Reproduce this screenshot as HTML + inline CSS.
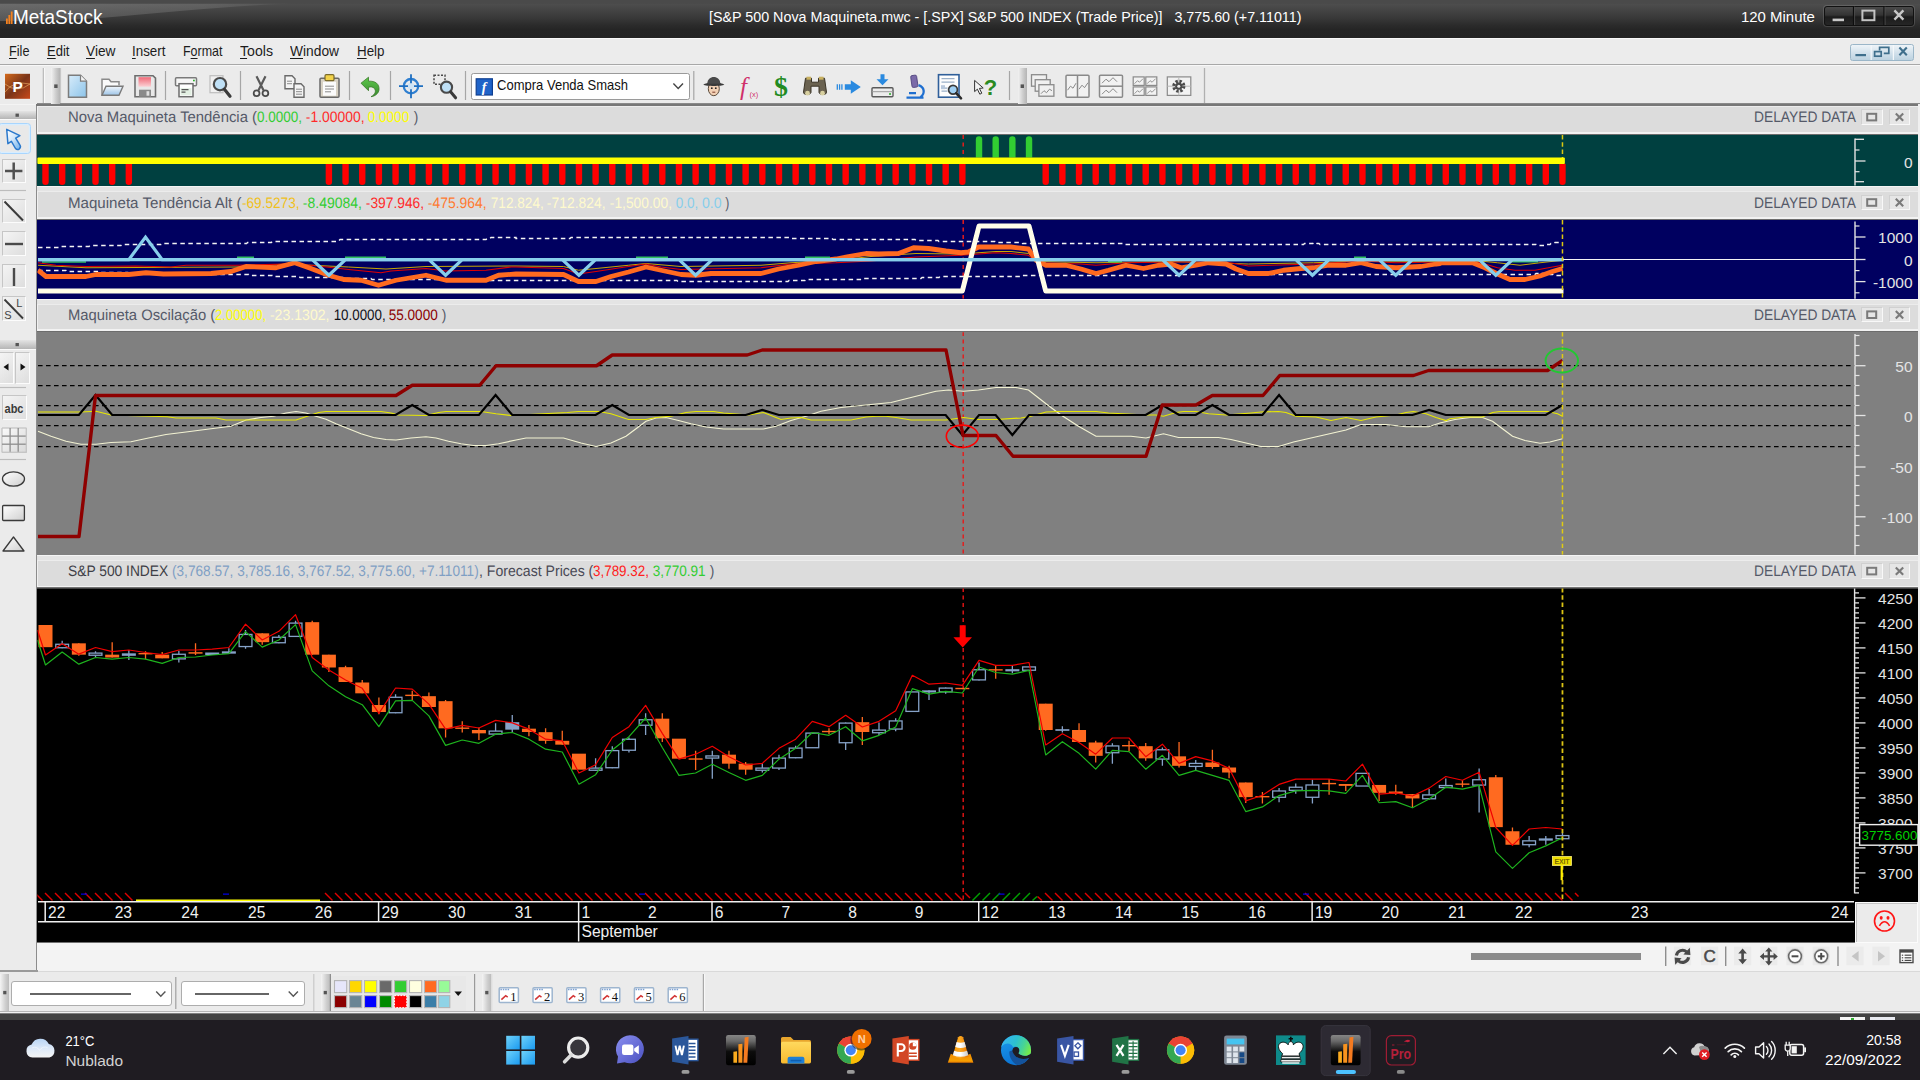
<!DOCTYPE html>
<html><head><meta charset="utf-8"><title>MetaStock</title>
<style>
html,body{margin:0;padding:0;background:#ebebeb;}
body{width:1920px;height:1080px;overflow:hidden;position:relative;font-family:"Liberation Sans", sans-serif;}
#root{position:absolute;left:0;top:0;width:1920px;height:1080px;overflow:hidden;}
#root>div{position:absolute;}
.t,.ht{position:absolute;white-space:nowrap;transform-origin:0 0;line-height:1.15;}
.ht{font-size:15.2px;color:#545968;}
.t u{text-decoration:underline;text-underline-offset:1.500px;text-decoration-thickness:1px}
svg{position:absolute;left:0;top:0;}
svg text{font-family:"Liberation Sans", sans-serif;}
</style></head>
<body>
<div id="root">
<div style="left:0px;top:0px;width:1920px;height:1080px;background:#ebebeb"></div>
<div style="left:0px;top:0px;width:1920px;height:38px;background:linear-gradient(#4a4a4a 0%,#4a4a4a 9%,#4d4d4d 10.5%,#454545 25%,#383838 48%,#2b2b2b 66%,#252525 78%,#242424 100%)"></div>
<div style="left:0px;top:38px;width:1920px;height:26px;background:#ececec;border-top:1px solid #f8f8f8;box-sizing:border-box"></div>
<div style="left:0px;top:64px;width:1920px;height:1px;background:#a8a8a8"></div>
<div style="left:0px;top:65px;width:1920px;height:1px;background:#f8f8f8"></div>
<div style="left:0px;top:66px;width:1920px;height:38px;background:#ebebeb"></div>
<div style="left:37px;top:103px;width:1883px;height:1.5px;background:#8a8a8a"></div>
<div style="left:0px;top:104px;width:37px;height:1px;background:#f4f4f4"></div>
<div style="left:35.6px;top:104px;width:1.6px;height:868px;background:#8c8c8c"></div>
<div style="left:1918px;top:104px;width:2px;height:868px;background:#f0f0f0"></div>
<div style="left:37.4px;top:135px;width:1880.6px;height:50.6px;background:#004040"></div>
<div style="left:37.4px;top:220px;width:1880.6px;height:78.7px;background:#000060"></div>
<div style="left:37.4px;top:332.2px;width:1880.6px;height:222.5px;background:#808080"></div>
<div style="left:37.4px;top:588.6px;width:1880.6px;height:353.4px;background:#000000"></div>
<div style="left:37.4px;top:105.9px;width:1880.6px;height:29.1px;background:#dcdcdc;border-top:1.6px solid #ececec;border-left:1.5px solid #f0f0f0;box-sizing:border-box"></div>
<div style="left:37.4px;top:132.1px;width:1880.6px;height:1.5px;background:#f2f2f2"></div>
<div style="left:37.4px;top:133.6px;width:1880.6px;height:1.4px;background:linear-gradient(#7a7a7a,#6a6a6a 60%,#004040)"></div>
<div style="left:37.4px;top:185.6px;width:1881px;height:1.3px;background:#f4f4f4"></div>
<div style="left:37.4px;top:186.9px;width:1881px;height:3.9px;background:#e4e4e4"></div>
<div style="left:37.4px;top:190.8px;width:1880.6px;height:29.2px;background:#dcdcdc;border-top:1.6px solid #ececec;border-left:1.5px solid #f0f0f0;box-sizing:border-box"></div>
<div style="left:37.4px;top:217.1px;width:1880.6px;height:1.5px;background:#f2f2f2"></div>
<div style="left:37.4px;top:218.6px;width:1880.6px;height:1.4px;background:linear-gradient(#7a7a7a,#6a6a6a 60%,#000060)"></div>
<div style="left:37.4px;top:298.7px;width:1881px;height:1.3px;background:#f4f4f4"></div>
<div style="left:37.4px;top:300px;width:1881px;height:3.9px;background:#e4e4e4"></div>
<div style="left:37.4px;top:303.9px;width:1880.6px;height:28.3px;background:#dcdcdc;border-top:1.6px solid #ececec;border-left:1.5px solid #f0f0f0;box-sizing:border-box"></div>
<div style="left:37.4px;top:329.3px;width:1880.6px;height:1.5px;background:#f2f2f2"></div>
<div style="left:37.4px;top:330.8px;width:1880.6px;height:1.4px;background:linear-gradient(#7a7a7a,#6a6a6a 60%,#808080)"></div>
<div style="left:37.4px;top:554.7px;width:1881px;height:1.3px;background:#f4f4f4"></div>
<div style="left:37.4px;top:556px;width:1881px;height:3.9px;background:#e4e4e4"></div>
<div style="left:37.4px;top:559.9px;width:1880.6px;height:28.7px;background:#dcdcdc;border-top:1.6px solid #ececec;border-left:1.5px solid #f0f0f0;box-sizing:border-box"></div>
<div style="left:37.4px;top:585.7px;width:1880.6px;height:1.5px;background:#f2f2f2"></div>
<div style="left:37.4px;top:587.2px;width:1880.6px;height:1.4px;background:linear-gradient(#7a7a7a,#6a6a6a 60%,#000000)"></div>
<div style="left:36px;top:104.3px;width:1882px;height:1.6px;background:#777"></div>
<div class="ht" style="transform:rotate(.03deg) scaleX(0.9790);left:68px;top:108.4px;white-space:pre;">Nova Maquineta Tendência (</div>
<div class="ht" style="transform:rotate(.03deg) scaleX(0.8858);left:257px;top:108.4px;white-space:pre;color:#32cd32;">0.0000,</div>
<div class="ht" style="transform:rotate(.03deg) scaleX(0.9138);left:301.9px;top:108.4px;white-space:pre;color:#ff2a2a;"> -1.00000,</div>
<div class="ht" style="transform:rotate(.03deg) scaleX(0.8919);left:364.4px;top:108.4px;white-space:pre;color:#ffff00;"> 0.0000</div>
<div class="ht" style="transform:rotate(.03deg) scaleX(0.8949);left:409.6px;top:108.4px;white-space:pre;"> )</div>
<div class="ht dd" style="transform:rotate(.03deg) scaleX(0.9078);left:1753.5px;top:108.4px;">DELAYED DATA</div>
<div style="left:1861px;top:109.3px;width:21.5px;height:15.6px;background:#e6e6e6;border:1px solid #f8f8f8;border-top-color:#d0d0d0;border-left-color:#d0d0d0;box-sizing:border-box"></div>
<div style="left:1888.8px;top:109.3px;width:21.5px;height:15.6px;background:#e6e6e6;border:1px solid #f8f8f8;border-top-color:#d0d0d0;border-left-color:#d0d0d0;box-sizing:border-box"></div>
<div class="ht" style="transform:rotate(.03deg) scaleX(0.9943);left:68px;top:193.5px;white-space:pre;">Maquineta Tendência Alt (</div>
<div class="ht" style="transform:rotate(.03deg) scaleX(0.8958);left:241.5px;top:193.5px;white-space:pre;color:#f0c020;">-69.5273,</div>
<div class="ht" style="transform:rotate(.03deg) scaleX(0.9195);left:299px;top:193.5px;white-space:pre;color:#32cd32;"> -8.49084,</div>
<div class="ht" style="transform:rotate(.03deg) scaleX(0.9079);left:361.9px;top:193.5px;white-space:pre;color:#ff2a2a;"> -397.946,</div>
<div class="ht" style="transform:rotate(.03deg) scaleX(0.9151);left:424px;top:193.5px;white-space:pre;color:#ff7a30;"> -475.964,</div>
<div class="ht" style="transform:rotate(.03deg) scaleX(0.8968);left:486.6px;top:193.5px;white-space:pre;color:#fffacd;"> 712.824,</div>
<div class="ht" style="transform:rotate(.03deg) scaleX(0.9138);left:543.4px;top:193.5px;white-space:pre;color:#fffacd;"> -712.824,</div>
<div class="ht" style="transform:rotate(.03deg) scaleX(0.9089);left:605.9px;top:193.5px;white-space:pre;color:#fffacd;"> -1,500.00,</div>
<div class="ht" style="transform:rotate(.03deg) scaleX(0.8866);left:671.9px;top:193.5px;white-space:pre;color:#87ceeb;"> 0.0,</div>
<div class="ht" style="transform:rotate(.03deg) scaleX(0.9275);left:698.1px;top:193.5px;white-space:pre;color:#87ceeb;"> 0.0</div>
<div class="ht" style="transform:rotate(.03deg) scaleX(0.7980);left:721.6px;top:193.5px;white-space:pre;"> )</div>
<div class="ht dd" style="transform:rotate(.03deg) scaleX(0.9078);left:1753.5px;top:193.5px;">DELAYED DATA</div>
<div style="left:1861px;top:194.7px;width:21.5px;height:15.6px;background:#e6e6e6;border:1px solid #f8f8f8;border-top-color:#d0d0d0;border-left-color:#d0d0d0;box-sizing:border-box"></div>
<div style="left:1888.8px;top:194.7px;width:21.5px;height:15.6px;background:#e6e6e6;border:1px solid #f8f8f8;border-top-color:#d0d0d0;border-left-color:#d0d0d0;box-sizing:border-box"></div>
<div class="ht" style="transform:rotate(.03deg) scaleX(0.9741);left:68px;top:305.7px;white-space:pre;">Maquineta Oscilação (</div>
<div class="ht" style="transform:rotate(.03deg) scaleX(0.8645);left:215.2px;top:305.7px;white-space:pre;color:#ffff00;">2.00000,</div>
<div class="ht" style="transform:rotate(.03deg) scaleX(0.9283);left:266.3px;top:305.7px;white-space:pre;color:#fffacd;"> -23.1302,</div>
<div class="ht" style="transform:rotate(.03deg) scaleX(0.8778);left:329.8px;top:305.7px;white-space:pre;color:#101018;"> 10.0000,</div>
<div class="ht" style="transform:rotate(.03deg) scaleX(0.8915);left:385.4px;top:305.7px;white-space:pre;color:#8b0000;"> 55.0000</div>
<div class="ht" style="transform:rotate(.03deg) scaleX(0.9057);left:438.1px;top:305.7px;white-space:pre;"> )</div>
<div class="ht dd" style="transform:rotate(.03deg) scaleX(0.9078);left:1753.5px;top:305.7px;">DELAYED DATA</div>
<div style="left:1861px;top:306.9px;width:21.5px;height:15.6px;background:#e6e6e6;border:1px solid #f8f8f8;border-top-color:#d0d0d0;border-left-color:#d0d0d0;box-sizing:border-box"></div>
<div style="left:1888.8px;top:306.9px;width:21.5px;height:15.6px;background:#e6e6e6;border:1px solid #f8f8f8;border-top-color:#d0d0d0;border-left-color:#d0d0d0;box-sizing:border-box"></div>
<div class="ht" style="transform:rotate(.03deg) scaleX(0.9089);left:68px;top:561.9px;white-space:pre;color:#3e3e46;">S&amp;P 500 INDEX </div>
<div class="ht" style="transform:rotate(.03deg) scaleX(0.8972);left:172.1px;top:561.9px;white-space:pre;color:#7f9fc4;">(3,768.57, 3,785.16, 3,767.52, 3,775.60, +7.11011)</div>
<div class="ht" style="transform:rotate(.03deg) scaleX(0.9276);left:478.8px;top:561.9px;white-space:pre;color:#4a4a56;">, Forecast Prices (</div>
<div class="ht" style="transform:rotate(.03deg) scaleX(0.8826);left:593.1px;top:561.9px;white-space:pre;color:#ff2020;">3,789.32,</div>
<div class="ht" style="transform:rotate(.03deg) scaleX(0.8935);left:649px;top:561.9px;white-space:pre;color:#32cd32;"> 3,770.91</div>
<div class="ht" style="transform:rotate(.03deg) scaleX(0.9057);left:705.6px;top:561.9px;white-space:pre;"> )</div>
<div class="ht dd" style="transform:rotate(.03deg) scaleX(0.9078);left:1753.5px;top:561.9px;">DELAYED DATA</div>
<div style="left:1861px;top:563.3px;width:21.5px;height:15.6px;background:#e6e6e6;border:1px solid #f8f8f8;border-top-color:#d0d0d0;border-left-color:#d0d0d0;box-sizing:border-box"></div>
<div style="left:1888.8px;top:563.3px;width:21.5px;height:15.6px;background:#e6e6e6;border:1px solid #f8f8f8;border-top-color:#d0d0d0;border-left-color:#d0d0d0;box-sizing:border-box"></div>
<div style="left:1854.8px;top:902px;width:63.4px;height:41.2px;background:#fbfbfb"></div>
<div style="left:1856.4px;top:903.2px;width:60.2px;height:38.6px;background:#ebebeb;border-left:1.3px solid #bdbdbd;border-top:1.6px solid #c4c4c4;box-sizing:border-box"></div>
<div style="left:37px;top:941.6px;width:1818px;height:1.8px;background:#707070"></div>
<div style="left:37px;top:943.4px;width:1883px;height:28px;background:#f3f3f3"></div>
<div style="left:0px;top:971px;width:1920px;height:1.2px;background:#d9d9d9"></div>
<div style="left:0px;top:972.2px;width:1920px;height:40px;background:#ebebeb"></div>
<div style="left:0px;top:970.4px;width:37.6px;height:1.2px;background:#9a9a9a"></div>
<div style="left:1471px;top:953px;width:170px;height:7px;background:#8a8a8a"></div>
<div style="left:0px;top:974px;width:9px;height:37px;background:linear-gradient(90deg,#f4f4f4,#cfcfcf 60%,#bcbcbc)"></div>
<div style="left:10.5px;top:981px;width:161.5px;height:25px;background:#fff;border:1.4px solid #adadad;border-radius:3px;box-sizing:border-box"></div>
<div style="left:180.5px;top:981px;width:124px;height:25px;background:#fff;border:1.4px solid #adadad;border-radius:3px;box-sizing:border-box"></div>
<div style="left:320.5px;top:974px;width:9px;height:37px;background:linear-gradient(90deg,#f4f4f4,#cfcfcf 60%,#bcbcbc)"></div>
<div style="left:330px;top:976px;width:136px;height:35px;background:#e8e8e8"></div>
<div style="left:482px;top:974px;width:9px;height:37px;background:linear-gradient(90deg,#f4f4f4,#cfcfcf 60%,#bcbcbc)"></div>
<div style="left:0px;top:1011px;width:1920px;height:1.1px;background:#b6b6b6"></div>
<div style="left:0px;top:1012.1px;width:1920px;height:1.2px;background:#f2f2f2"></div>
<div style="left:0px;top:1013.3px;width:1920px;height:1.2px;background:linear-gradient(#b0b0b0,#505050)"></div>
<div style="left:0px;top:1014.4px;width:1920px;height:5.8px;background:#434343"></div>
<div style="left:0px;top:1020px;width:1920px;height:60px;background:#1f1c22"></div>
<div style="left:1840.4px;top:1017px;width:24.6px;height:3px;background:#f4f4f4"></div>
<div style="left:1870.4px;top:1017px;width:24.6px;height:3px;background:#e8eaf0"></div>
<div style="left:1851px;top:1018px;width:3px;height:2px;background:#30b030"></div>
<div class="t" id="logo" style="transform:scaleX(0.9189);left:12.6px;top:4.6px;font-size:20.600px;color:#fff;">MetaStock</div>
<div class="t" id="title" style="transform:scaleX(0.9532);left:709px;top:8.200px;font-size:15px;color:#fff;white-space:pre">[S&amp;P 500 Nova Maquineta.mwc - [.SPX] S&amp;P 500 INDEX (Trade Price)]   3,775.60 (+7.11011)</div>
<div class="t" id="tf" style="transform:scaleX(0.9705);left:1740.600px;top:8.200px;font-size:15.400px;color:#fff;">120 Minute</div>
<div style="left:1824px;top:5.6px;width:90.4px;height:20.2px;background:linear-gradient(#4a4a4a,#333 45%,#1c1c1c 55%,#262626);border:1.2px solid #111;border-radius:3px;box-sizing:border-box;box-shadow:0 0 0 1px rgba(255,255,255,.13)"></div>
<div style="left:1850px;top:44px;width:64.4px;height:16.8px;background:linear-gradient(#eef4f8,#d4e2ec 50%,#bcd2e0);border:1px solid #9bb6c8;border-radius:2.500px;box-sizing:border-box"></div>
<div class="t mn" style="transform:scaleX(0.8712);left:9px;top:42.600px;font-size:14.600px;color:#1c1c1c;"><u>F</u>ile</div>
<div class="t mn" style="transform:scaleX(0.8944);left:46.5px;top:42.600px;font-size:14.600px;color:#1c1c1c;"><u>E</u>dit</div>
<div class="t mn" style="transform:scaleX(0.9398);left:86px;top:42.600px;font-size:14.600px;color:#1c1c1c;"><u>V</u>iew</div>
<div class="t mn" style="transform:scaleX(0.9174);left:132px;top:42.600px;font-size:14.600px;color:#1c1c1c;"><u>I</u>nsert</div>
<div class="t mn" style="transform:scaleX(0.8543);left:183px;top:42.600px;font-size:14.600px;color:#1c1c1c;">F<u>o</u>rmat</div>
<div class="t mn" style="transform:scaleX(0.9684);left:240px;top:42.600px;font-size:14.600px;color:#1c1c1c;"><u>T</u>ools</div>
<div class="t mn" style="transform:scaleX(0.9437);left:290px;top:42.600px;font-size:14.600px;color:#1c1c1c;"><u>W</u>indow</div>
<div class="t mn" style="transform:scaleX(0.9157);left:356.5px;top:42.600px;font-size:14.600px;color:#1c1c1c;"><u>H</u>elp</div>
<div style="left:51px;top:68px;width:9px;height:35.5px;background:linear-gradient(90deg,#f2f2f2,#cdcdcd 55%,#b4b4b4)"></div>
<div style="left:470.5px;top:72.6px;width:219px;height:27.4px;background:#fff;border:1.4px solid #9a9a9a;border-radius:2.500px;box-sizing:border-box"></div>
<div class="t" id="cmb" style="transform:scaleX(0.9047);left:497px;top:77.400px;font-size:14.400px;color:#111;">Compra Venda Smash</div>
<div style="left:1017.5px;top:68px;width:9px;height:35.5px;background:linear-gradient(90deg,#f2f2f2,#cdcdcd 55%,#b4b4b4)"></div>
<div style="left:0px;top:110.8px;width:35.6px;height:8.6px;background:linear-gradient(#e4e4e4,#cacaca 55%,#b6b6b6)"></div>
<div style="left:0px;top:119.4px;width:35.6px;height:1px;background:#fafafa"></div>
<div style="left:0px;top:340.2px;width:35.6px;height:8.6px;background:linear-gradient(#e4e4e4,#cacaca 55%,#b6b6b6)"></div>
<div style="left:0px;top:348.8px;width:35.6px;height:1px;background:#fafafa"></div>
<div style="left:-2px;top:122.8px;width:32.8px;height:30.8px;background:#e9e9e9;border:1.800px solid #a8d6ff;border-radius:3.500px;box-sizing:border-box;box-shadow:inset 0 0 0 1.200px #d8edff"></div>
<div style="left:2px;top:159.2px;width:23.8px;height:23.8px;background:linear-gradient(135deg,#f4f4f4,#dedede);border:1px solid #c6c6c6;border-right-color:#fcfcfc;border-bottom-color:#fcfcfc;box-sizing:border-box"></div>
<div style="left:1.5px;top:198.6px;width:24.2px;height:24.2px;background:linear-gradient(135deg,#f4f4f4,#dedede);border:1px solid #c6c6c6;border-right-color:#fcfcfc;border-bottom-color:#fcfcfc;box-sizing:border-box"></div>
<div style="left:1.5px;top:231.4px;width:24.2px;height:24.2px;background:linear-gradient(135deg,#f4f4f4,#dedede);border:1px solid #c6c6c6;border-right-color:#fcfcfc;border-bottom-color:#fcfcfc;box-sizing:border-box"></div>
<div style="left:1.5px;top:264px;width:24.2px;height:24.2px;background:linear-gradient(135deg,#f4f4f4,#dedede);border:1px solid #c6c6c6;border-right-color:#fcfcfc;border-bottom-color:#fcfcfc;box-sizing:border-box"></div>
<div style="left:1.5px;top:296.4px;width:24.2px;height:24.2px;background:linear-gradient(135deg,#f4f4f4,#dedede);border:1px solid #c6c6c6;border-right-color:#fcfcfc;border-bottom-color:#fcfcfc;box-sizing:border-box"></div>
<div style="left:-1px;top:352px;width:14.5px;height:31.5px;background:linear-gradient(135deg,#f4f4f4,#dedede);border:1px solid #c6c6c6;border-right-color:#fcfcfc;border-bottom-color:#fcfcfc;box-sizing:border-box"></div>
<div style="left:15px;top:352px;width:14.5px;height:31.5px;background:linear-gradient(135deg,#f4f4f4,#dedede);border:1px solid #c6c6c6;border-right-color:#fcfcfc;border-bottom-color:#fcfcfc;box-sizing:border-box"></div>
<div style="left:2px;top:395px;width:24.5px;height:24.5px;background:linear-gradient(135deg,#f4f4f4,#dedede);border:1px solid #c6c6c6;border-right-color:#fcfcfc;border-bottom-color:#fcfcfc;box-sizing:border-box"></div>
<div style="left:2px;top:428px;width:24.5px;height:24.5px;background:linear-gradient(135deg,#fafafa,#d8d8d8)"></div>
<svg width="1920" height="1080" viewBox="0 0 1920 1080">
<defs>
<clipPath id="c2"><rect x="37.4" y="220" width="1880.6" height="78.7"/></clipPath>
<clipPath id="c3"><rect x="37.4" y="332.2" width="1880.6" height="222.5"/></clipPath>
<clipPath id="c4"><rect x="37.4" y="588.6" width="1880.6" height="314"/></clipPath>
<linearGradient id="gloss" x1="0" y1="0" x2="1" y2="0"><stop offset="0" stop-color="#fff" stop-opacity=".17"/><stop offset=".7" stop-color="#fff" stop-opacity=".12"/><stop offset="1" stop-color="#fff" stop-opacity=".04"/></linearGradient>
<linearGradient id="vlcb" x1="0" y1="0" x2="0" y2="1"><stop offset="0" stop-color="#f08a00"/><stop offset=".8" stop-color="#f7a000"/><stop offset="1" stop-color="#e07000"/></linearGradient>
<linearGradient id="vlcc" x1="0" y1="0" x2="1" y2="0"><stop offset="0" stop-color="#f89400"/><stop offset=".45" stop-color="#fca820"/><stop offset="1" stop-color="#e87400"/></linearGradient>
<linearGradient id="vlcw" x1="0" y1="0" x2="1" y2="0"><stop offset="0" stop-color="#f4f4f4"/><stop offset=".5" stop-color="#ffffff"/><stop offset="1" stop-color="#c8c8c8"/></linearGradient>
<linearGradient id="cloud" x1="0" y1="0" x2="0" y2="1"><stop offset="0" stop-color="#b8d4f4"/><stop offset=".55" stop-color="#dfeaf8"/><stop offset="1" stop-color="#f4f4f4"/></linearGradient>
<linearGradient id="win" x1="0" y1="0" x2="1" y2="1"><stop offset="0" stop-color="#6fd2fa"/><stop offset="1" stop-color="#1a9af0"/></linearGradient>
<linearGradient id="teams" x1="0" y1="0" x2="1" y2="1"><stop offset="0" stop-color="#8a8ff0"/><stop offset="1" stop-color="#4a50c0"/></linearGradient>
<linearGradient id="msbg" x1="0" y1="0" x2="0" y2="1"><stop offset="0" stop-color="#858585"/><stop offset=".2" stop-color="#6a6a6a"/><stop offset=".55" stop-color="#0c0c0c"/><stop offset="1" stop-color="#000"/></linearGradient>
<linearGradient id="fold" x1="0" y1="0" x2="0" y2="1"><stop offset="0" stop-color="#ffd95e"/><stop offset="1" stop-color="#f7b92e"/></linearGradient>
<linearGradient id="edge1" x1="0" y1="0" x2=".3" y2="1"><stop offset="0" stop-color="#1c9cec"/><stop offset="1" stop-color="#0c74d4"/></linearGradient>
<linearGradient id="edge2" x1="0" y1=".3" x2="1" y2=".6"><stop offset="0" stop-color="#38b4f4"/><stop offset=".45" stop-color="#2cc0d0"/><stop offset=".75" stop-color="#48d494"/><stop offset="1" stop-color="#74ea4c"/></linearGradient>
<linearGradient id="pic" x1="0" y1="0" x2="1" y2="1"><stop offset="0" stop-color="#d46a1c"/><stop offset=".5" stop-color="#7a3418"/><stop offset="1" stop-color="#c8481a"/></linearGradient>
<linearGradient id="newdoc" x1="0" y1="0" x2="1" y2="1"><stop offset="0" stop-color="#d8ecfa"/><stop offset="1" stop-color="#8cc4ea"/></linearGradient>
<linearGradient id="fopen" x1="0" y1="0" x2="0" y2="1"><stop offset="0" stop-color="#f4f8fc"/><stop offset="1" stop-color="#9cc4e8"/></linearGradient>
<linearGradient id="savep" x1="0" y1="0" x2="0" y2="1"><stop offset="0" stop-color="#f06a78"/><stop offset="1" stop-color="#fbd0d4"/></linearGradient>
<linearGradient id="undo" x1="0" y1="0" x2="0" y2="1"><stop offset="0" stop-color="#5cc84a"/><stop offset="1" stop-color="#3a8a30"/></linearGradient>
<linearGradient id="ptr" x1="0" y1="0" x2="1" y2="1"><stop offset="0" stop-color="#ffffff"/><stop offset=".45" stop-color="#d4e8fa"/><stop offset="1" stop-color="#6eb0ea"/></linearGradient>
<linearGradient id="shp" x1="0" y1="0" x2="1" y2="1"><stop offset="0" stop-color="#ffffff"/><stop offset="1" stop-color="#cfcfcf"/></linearGradient>
</defs>
<path d="M0 3.8H292C235 5 160 13.500 100 18C60 20.500 20 21 0 21z" fill="url(#gloss)"/>
<rect x="1867.2" y="113.8" width="9" height="6.6" fill="none" stroke="#7a7a7a" stroke-width="2"/>
<path d="M1895.8 113.4l7.4 7.4m0 -7.4l-7.4 7.4" stroke="#7a7a7a" stroke-width="2.1" fill="none"/>
<rect x="1867.2" y="199.2" width="9" height="6.6" fill="none" stroke="#7a7a7a" stroke-width="2"/>
<path d="M1895.8 198.8l7.4 7.4m0 -7.4l-7.4 7.4" stroke="#7a7a7a" stroke-width="2.1" fill="none"/>
<rect x="1867.2" y="311.4" width="9" height="6.6" fill="none" stroke="#7a7a7a" stroke-width="2"/>
<path d="M1895.8 311l7.4 7.4m0 -7.4l-7.4 7.4" stroke="#7a7a7a" stroke-width="2.1" fill="none"/>
<rect x="1867.2" y="567.8" width="9" height="6.6" fill="none" stroke="#7a7a7a" stroke-width="2"/>
<path d="M1895.8 567.4l7.4 7.4m0 -7.4l-7.4 7.4" stroke="#7a7a7a" stroke-width="2.1" fill="none"/>
<line x1="963.2" y1="135" x2="963.2" y2="185.6" stroke="#e41c1c" stroke-width="1.5" stroke-dasharray="4 3.5"/>
<line x1="1562.47" y1="135" x2="1562.47" y2="185.6" stroke="#dcc810" stroke-width="1.5" stroke-dasharray="4.4 2.9"/>
<path d="M42.3 163.8V181.8a3.2 3.2 0 0 0 6.4 0V163.8z" fill="#ff0000"/>
<path d="M58.97 163.8V181.8a3.2 3.2 0 0 0 6.4 0V163.8z" fill="#ff0000"/>
<path d="M75.64 163.8V181.8a3.2 3.2 0 0 0 6.4 0V163.8z" fill="#ff0000"/>
<path d="M92.31 163.8V181.8a3.2 3.2 0 0 0 6.4 0V163.8z" fill="#ff0000"/>
<path d="M108.98 163.8V181.8a3.2 3.2 0 0 0 6.4 0V163.8z" fill="#ff0000"/>
<path d="M125.65 163.8V181.8a3.2 3.2 0 0 0 6.4 0V163.8z" fill="#ff0000"/>
<path d="M325.69 163.8V181.8a3.2 3.2 0 0 0 6.4 0V163.8z" fill="#ff0000"/>
<path d="M342.36 163.8V181.8a3.2 3.2 0 0 0 6.4 0V163.8z" fill="#ff0000"/>
<path d="M359.03 163.8V181.8a3.2 3.2 0 0 0 6.4 0V163.8z" fill="#ff0000"/>
<path d="M375.7 163.8V181.8a3.2 3.2 0 0 0 6.4 0V163.8z" fill="#ff0000"/>
<path d="M392.37 163.8V181.8a3.2 3.2 0 0 0 6.4 0V163.8z" fill="#ff0000"/>
<path d="M409.04 163.8V181.8a3.2 3.2 0 0 0 6.4 0V163.8z" fill="#ff0000"/>
<path d="M425.71 163.8V181.8a3.2 3.2 0 0 0 6.4 0V163.8z" fill="#ff0000"/>
<path d="M442.38 163.8V181.8a3.2 3.2 0 0 0 6.4 0V163.8z" fill="#ff0000"/>
<path d="M459.05 163.8V181.8a3.2 3.2 0 0 0 6.4 0V163.8z" fill="#ff0000"/>
<path d="M475.72 163.8V181.8a3.2 3.2 0 0 0 6.4 0V163.8z" fill="#ff0000"/>
<path d="M492.39 163.8V181.8a3.2 3.2 0 0 0 6.4 0V163.8z" fill="#ff0000"/>
<path d="M509.06 163.8V181.8a3.2 3.2 0 0 0 6.4 0V163.8z" fill="#ff0000"/>
<path d="M525.73 163.8V181.8a3.2 3.2 0 0 0 6.4 0V163.8z" fill="#ff0000"/>
<path d="M542.4 163.8V181.8a3.2 3.2 0 0 0 6.4 0V163.8z" fill="#ff0000"/>
<path d="M559.07 163.8V181.8a3.2 3.2 0 0 0 6.4 0V163.8z" fill="#ff0000"/>
<path d="M575.74 163.8V181.8a3.2 3.2 0 0 0 6.4 0V163.8z" fill="#ff0000"/>
<path d="M592.41 163.8V181.8a3.2 3.2 0 0 0 6.4 0V163.8z" fill="#ff0000"/>
<path d="M609.08 163.8V181.8a3.2 3.2 0 0 0 6.4 0V163.8z" fill="#ff0000"/>
<path d="M625.75 163.8V181.8a3.2 3.2 0 0 0 6.4 0V163.8z" fill="#ff0000"/>
<path d="M642.42 163.8V181.8a3.2 3.2 0 0 0 6.4 0V163.8z" fill="#ff0000"/>
<path d="M659.09 163.8V181.8a3.2 3.2 0 0 0 6.4 0V163.8z" fill="#ff0000"/>
<path d="M675.76 163.8V181.8a3.2 3.2 0 0 0 6.4 0V163.8z" fill="#ff0000"/>
<path d="M692.43 163.8V181.8a3.2 3.2 0 0 0 6.4 0V163.8z" fill="#ff0000"/>
<path d="M709.1 163.8V181.8a3.2 3.2 0 0 0 6.4 0V163.8z" fill="#ff0000"/>
<path d="M725.77 163.8V181.8a3.2 3.2 0 0 0 6.4 0V163.8z" fill="#ff0000"/>
<path d="M742.44 163.8V181.8a3.2 3.2 0 0 0 6.4 0V163.8z" fill="#ff0000"/>
<path d="M759.11 163.8V181.8a3.2 3.2 0 0 0 6.4 0V163.8z" fill="#ff0000"/>
<path d="M775.78 163.8V181.8a3.2 3.2 0 0 0 6.4 0V163.8z" fill="#ff0000"/>
<path d="M792.45 163.8V181.8a3.2 3.2 0 0 0 6.4 0V163.8z" fill="#ff0000"/>
<path d="M809.12 163.8V181.8a3.2 3.2 0 0 0 6.4 0V163.8z" fill="#ff0000"/>
<path d="M825.79 163.8V181.8a3.2 3.2 0 0 0 6.4 0V163.8z" fill="#ff0000"/>
<path d="M842.46 163.8V181.8a3.2 3.2 0 0 0 6.4 0V163.8z" fill="#ff0000"/>
<path d="M859.13 163.8V181.8a3.2 3.2 0 0 0 6.4 0V163.8z" fill="#ff0000"/>
<path d="M875.8 163.8V181.8a3.2 3.2 0 0 0 6.4 0V163.8z" fill="#ff0000"/>
<path d="M892.47 163.8V181.8a3.2 3.2 0 0 0 6.4 0V163.8z" fill="#ff0000"/>
<path d="M909.14 163.8V181.8a3.2 3.2 0 0 0 6.4 0V163.8z" fill="#ff0000"/>
<path d="M925.81 163.8V181.8a3.2 3.2 0 0 0 6.4 0V163.8z" fill="#ff0000"/>
<path d="M942.48 163.8V181.8a3.2 3.2 0 0 0 6.4 0V163.8z" fill="#ff0000"/>
<path d="M959.15 163.8V181.8a3.2 3.2 0 0 0 6.4 0V163.8z" fill="#ff0000"/>
<path d="M975.82 157.6V139.4a3.2 3.2 0 0 1 6.4 0V157.6z" fill="#32cd32"/>
<path d="M992.49 157.6V139.4a3.2 3.2 0 0 1 6.4 0V157.6z" fill="#32cd32"/>
<path d="M1009.16 157.6V139.4a3.2 3.2 0 0 1 6.4 0V157.6z" fill="#32cd32"/>
<path d="M1025.83 157.6V139.4a3.2 3.2 0 0 1 6.4 0V157.6z" fill="#32cd32"/>
<path d="M1042.5 163.8V181.8a3.2 3.2 0 0 0 6.4 0V163.8z" fill="#ff0000"/>
<path d="M1059.17 163.8V181.8a3.2 3.2 0 0 0 6.4 0V163.8z" fill="#ff0000"/>
<path d="M1075.84 163.8V181.8a3.2 3.2 0 0 0 6.4 0V163.8z" fill="#ff0000"/>
<path d="M1092.51 163.8V181.8a3.2 3.2 0 0 0 6.4 0V163.8z" fill="#ff0000"/>
<path d="M1109.18 163.8V181.8a3.2 3.2 0 0 0 6.4 0V163.8z" fill="#ff0000"/>
<path d="M1125.85 163.8V181.8a3.2 3.2 0 0 0 6.4 0V163.8z" fill="#ff0000"/>
<path d="M1142.52 163.8V181.8a3.2 3.2 0 0 0 6.4 0V163.8z" fill="#ff0000"/>
<path d="M1159.19 163.8V181.8a3.2 3.2 0 0 0 6.4 0V163.8z" fill="#ff0000"/>
<path d="M1175.86 163.8V181.8a3.2 3.2 0 0 0 6.4 0V163.8z" fill="#ff0000"/>
<path d="M1192.53 163.8V181.8a3.2 3.2 0 0 0 6.4 0V163.8z" fill="#ff0000"/>
<path d="M1209.2 163.8V181.8a3.2 3.2 0 0 0 6.4 0V163.8z" fill="#ff0000"/>
<path d="M1225.87 163.8V181.8a3.2 3.2 0 0 0 6.4 0V163.8z" fill="#ff0000"/>
<path d="M1242.54 163.8V181.8a3.2 3.2 0 0 0 6.4 0V163.8z" fill="#ff0000"/>
<path d="M1259.21 163.8V181.8a3.2 3.2 0 0 0 6.4 0V163.8z" fill="#ff0000"/>
<path d="M1275.88 163.8V181.8a3.2 3.2 0 0 0 6.4 0V163.8z" fill="#ff0000"/>
<path d="M1292.55 163.8V181.8a3.2 3.2 0 0 0 6.4 0V163.8z" fill="#ff0000"/>
<path d="M1309.22 163.8V181.8a3.2 3.2 0 0 0 6.4 0V163.8z" fill="#ff0000"/>
<path d="M1325.89 163.8V181.8a3.2 3.2 0 0 0 6.4 0V163.8z" fill="#ff0000"/>
<path d="M1342.56 163.8V181.8a3.2 3.2 0 0 0 6.4 0V163.8z" fill="#ff0000"/>
<path d="M1359.23 163.8V181.8a3.2 3.2 0 0 0 6.4 0V163.8z" fill="#ff0000"/>
<path d="M1375.9 163.8V181.8a3.2 3.2 0 0 0 6.4 0V163.8z" fill="#ff0000"/>
<path d="M1392.57 163.8V181.8a3.2 3.2 0 0 0 6.4 0V163.8z" fill="#ff0000"/>
<path d="M1409.24 163.8V181.8a3.2 3.2 0 0 0 6.4 0V163.8z" fill="#ff0000"/>
<path d="M1425.91 163.8V181.8a3.2 3.2 0 0 0 6.4 0V163.8z" fill="#ff0000"/>
<path d="M1442.58 163.8V181.8a3.2 3.2 0 0 0 6.4 0V163.8z" fill="#ff0000"/>
<path d="M1459.25 163.8V181.8a3.2 3.2 0 0 0 6.4 0V163.8z" fill="#ff0000"/>
<path d="M1475.92 163.8V181.8a3.2 3.2 0 0 0 6.4 0V163.8z" fill="#ff0000"/>
<path d="M1492.59 163.8V181.8a3.2 3.2 0 0 0 6.4 0V163.8z" fill="#ff0000"/>
<path d="M1509.26 163.8V181.8a3.2 3.2 0 0 0 6.4 0V163.8z" fill="#ff0000"/>
<path d="M1525.93 163.8V181.8a3.2 3.2 0 0 0 6.4 0V163.8z" fill="#ff0000"/>
<path d="M1542.6 163.8V181.8a3.2 3.2 0 0 0 6.4 0V163.8z" fill="#ff0000"/>
<path d="M1559.27 163.8V181.8a3.2 3.2 0 0 0 6.4 0V163.8z" fill="#ff0000"/>
<rect x="37.4" y="157.4" width="1527.47" height="6.6" fill="#ffff00" rx="1"/>
<line x1="1855" y1="138.6" x2="1855" y2="185.6" stroke="#e4e4e4" stroke-width="1.4" />
<line x1="1855" y1="150" x2="1859.5" y2="150" stroke="#e4e4e4" stroke-width="1.2" />
<line x1="1855" y1="171.7" x2="1859.5" y2="171.7" stroke="#e4e4e4" stroke-width="1.2" />
<line x1="1855" y1="161" x2="1865.5" y2="161" stroke="#e4e4e4" stroke-width="1.3" />
<text x="1912.6" y="167.5" text-anchor="end" font-size="15.5" fill="#e4e4e4">0</text>
<line x1="1855" y1="139.3" x2="1864" y2="139.3" stroke="#e4e4e4" stroke-width="1.3" />
<line x1="1855" y1="181.7" x2="1864" y2="181.7" stroke="#e4e4e4" stroke-width="1.3" />
<g clip-path="url(#c2)">
<line x1="963.2" y1="220" x2="963.2" y2="298.7" stroke="#e41c1c" stroke-width="1.5" stroke-dasharray="4 3.5"/>
<polyline points="38,247.5 59,247.5 60,246.5 89,246.5 90,245.5 121,245.5 122,244.5 161,244.5 162,243.5 246.6,243.5 247.6,242.5 271.31,242.5 272.25,241.5 336,241.5 337,240.5 339,240.5 340,239.5 486,239.5 487,238.5 490,238.5 491,237.5 516,237.5 516,238.5 570,238.5 571,237.5 789,237.5 790,238.5 832,238.5 833,239.5 915,239.5 916,240.5 938,240.5 939,241.5 995,241.5 996,242.5 1021.5,242.5 1022.5,243.5 1123,243.5 1124,244.5 1303.5,244.5 1304.54,243.5 1312.88,243.5 1313.92,242.5 1316,242.5 1317,243.5 1319,243.5 1320,244.5 1536,244.5 1537,245.5 1544,245.5 1545,244.5 1550,244.5 1551,243.5 1554,243.5 1555,242.5 1562.5,242.5" fill="none" stroke="#f4f4f4" stroke-width="1.35" stroke-dasharray="4.5 3.5"/>
<polyline points="38,270.5 66,270.5 67,271.5 100,271.5 101,272.5 128,272.5 129,273.5 180,273.5 181,274.5 248.67,274.5 249.66,275.5 272.25,275.5 273.19,276.5 299,276.5 300,277.5 343,277.5 344,278.5 371,278.5 372,279.5 452,279.5 453,280.5 677,280.5 678,281.5 788,281.5 789,280.5 805,280.5 806,279.5 863,279.5 864,278.5 921,278.5 922,277.5 939,277.5 940,276.5 1020.5,276.5 1021.5,275.5 1181.16,275.5 1182.17,274.5 1535,274.5 1536,273.5 1539,273.5 1540,272.5 1541,272.5 1542,273.5 1549,273.5 1550,274.5 1553,274.5 1554,275.5 1562.5,275.5" fill="none" stroke="#f4f4f4" stroke-width="1.35" stroke-dasharray="4.5 3.5"/>
<polyline points="38,265.25 86,267.75 236,267 286,264 348.5,267 386,269 426,266.5 511,266 516,266 563.5,266.5 578.5,270.25 628.5,265.25 646,263.5 681,266.5 761,265.25 791,262.75 836,260.25 871,256.5 916,253.5 961,254 996,251.5 1011,251.5 1028.5,253.5 1038.5,261.5 1096,262.75 1171,261.5 1248.5,264 1313.5,262.75 1361,261 1440,261.5 1440,261.5 1485,261.5 1497.5,262.75 1520,265.25 1540,262.75 1562.5,260.25" fill="none" stroke="#c8a800" stroke-width="1" />
<polyline points="38,262.75 56,265.25 86,266.5 136,266 171,267 186,265.25 236,265.25 286,264 311,265.25 348.5,269.5 381,272.75 391,271 426,268.5 446,271 486,270.25 511,267 516,267 563.5,268.5 578.5,274 596,271.5 628.5,266.5 646,264 661,267 681,269.5 761,267.75 791,264 836,262.75 871,261 916,257 961,255.25 996,252.75 1011,253.5 1028.5,255.25 1038.5,262.75 1081,264 1096,265.25 1126,262.75 1171,262 1226,262 1248.5,266 1271,265.25 1313.5,264 1361,261 1396,262.75 1440,262 1440,261.5 1472.5,261 1485,264 1497.5,267.75 1515,270.25 1535,270.25 1552.5,267 1562.5,265.25" fill="none" stroke="#e00000" stroke-width="1.2" />
<polyline points="38,270.25 46,276.5 86,276.5 96,274.5 128.5,274.5 146,272.75 163.5,274 211,273.5 231,271.5 246,266.5 276,267.75 294.75,262.75 311,268.5 328.5,275.25 343.5,279.5 361,280.25 378.5,285.25 396,280.25 426,275.25 446,280.25 486,280.25 498.5,275.25 516,274 563.5,274.5 578.5,281.5 596,281.5 611,276.5 628.5,272 646,267 661,270.25 681,274.5 696,275.25 711,273.5 761,273.5 778.5,269 798.5,265.25 816,261.5 836,259 848.5,256.5 866,253.5 878.5,254 898.5,253.5 913.5,247.75 928.5,248.5 946,251 961,252.75 968.5,252 978.5,247 996,247 1011,247 1028.5,249 1036,260.25 1046,265.25 1066,265.25 1081,269 1096,273.5 1108.5,270.25 1126,265.25 1143.5,268.5 1158.5,265.25 1171,264 1181,267.75 1196,265.25 1208.5,262.75 1226,264 1236,269 1248.5,273.5 1268.5,273.5 1283.5,270.25 1301,268.5 1313.5,267.75 1328.5,265.25 1346,265.25 1361,262.75 1376,266.5 1396,267.75 1421,266.5 1436,264 1440,263.5 1440,262.75 1472.5,262.75 1485,267.75 1497.5,274 1510,279.5 1525,279.5 1540,276 1552.5,271.5 1562.5,268.5" fill="none" stroke="#ff6a20" stroke-width="4.8" stroke-linejoin="round"/>
<line x1="42" y1="262" x2="86" y2="262" stroke="#30c060" stroke-width="1.6" />
<line x1="237" y1="257.4" x2="254" y2="257.4" stroke="#30c060" stroke-width="1.6" />
<line x1="345" y1="257.4" x2="386" y2="257.4" stroke="#30c060" stroke-width="1.6" />
<line x1="636" y1="257.4" x2="668" y2="257.4" stroke="#30c060" stroke-width="1.6" />
<line x1="805" y1="257.4" x2="830" y2="257.4" stroke="#30c060" stroke-width="1.6" />
<line x1="1108" y1="261.6" x2="1122" y2="261.6" stroke="#30c060" stroke-width="1.6" />
<line x1="1354" y1="257.4" x2="1366" y2="257.4" stroke="#30c060" stroke-width="1.6" />
<line x1="1510" y1="261.8" x2="1538" y2="261.8" stroke="#30c060" stroke-width="1.6" />
<polyline points="38,291 962.35,291 979.02,226 1029.03,226 1045.7,291 1563.47,291" fill="none" stroke="#fffde8" stroke-width="5" stroke-linejoin="round"/>
<line x1="38" y1="259.6" x2="1563.47" y2="259.6" stroke="#87ceeb" stroke-width="3.2" />
<polyline points="38,259.6 128.85,259.6 145.52,237.1 162.19,259.6 312.22,259.6 328.89,275.2 345.56,259.6 428.91,259.6 445.58,275.2 462.25,259.6 562.27,259.6 578.94,275.2 595.61,259.6 678.96,259.6 695.63,275.2 712.3,259.6 1162.39,259.6 1179.06,275.2 1195.73,259.6 1295.75,259.6 1312.42,275.2 1329.09,259.6 1379.1,259.6 1395.77,275.2 1412.44,259.6 1479.12,259.6 1495.79,275.2 1512.46,259.6 1563.47,259.6" fill="none" stroke="#87ceeb" stroke-width="3.2" stroke-linejoin="miter"/>
<line x1="1562.47" y1="259.5" x2="1865" y2="259.5" stroke="#f4f4f4" stroke-width="1.2" />
<line x1="1562.47" y1="220" x2="1562.47" y2="298.7" stroke="#dcc810" stroke-width="1.5" stroke-dasharray="4.4 2.9"/>
</g>
<line x1="1855" y1="221.5" x2="1855" y2="298.7" stroke="#e4e4e4" stroke-width="1.4" />
<line x1="1855" y1="226" x2="1859.5" y2="226" stroke="#e4e4e4" stroke-width="1.2" />
<line x1="1855" y1="248.2" x2="1859.5" y2="248.2" stroke="#e4e4e4" stroke-width="1.2" />
<line x1="1855" y1="270.6" x2="1859.5" y2="270.6" stroke="#e4e4e4" stroke-width="1.2" />
<line x1="1855" y1="292.8" x2="1859.5" y2="292.8" stroke="#e4e4e4" stroke-width="1.2" />
<line x1="1855" y1="237" x2="1865.5" y2="237" stroke="#e4e4e4" stroke-width="1.3" />
<line x1="1855" y1="259.5" x2="1865.5" y2="259.5" stroke="#e4e4e4" stroke-width="1.3" />
<line x1="1855" y1="281.6" x2="1865.5" y2="281.6" stroke="#e4e4e4" stroke-width="1.3" />
<text x="1912.6" y="243.3" text-anchor="end" font-size="15.5" fill="#e4e4e4">1000</text>
<text x="1912.6" y="265.8" text-anchor="end" font-size="15.5" fill="#e4e4e4">0</text>
<text x="1912.6" y="287.9" text-anchor="end" font-size="15.5" fill="#e4e4e4">-1000</text>
<g clip-path="url(#c3)">
<line x1="38" y1="365.5" x2="1855" y2="365.5" stroke="#000" stroke-width="1.25" stroke-dasharray="4.6 3.4"/>
<line x1="38" y1="385.5" x2="1855" y2="385.5" stroke="#000" stroke-width="1.25" stroke-dasharray="4.6 3.4"/>
<line x1="38" y1="405.5" x2="1855" y2="405.5" stroke="#000" stroke-width="1.25" stroke-dasharray="4.6 3.4"/>
<line x1="38" y1="425.5" x2="1855" y2="425.5" stroke="#000" stroke-width="1.25" stroke-dasharray="4.6 3.4"/>
<line x1="38" y1="446.5" x2="1855" y2="446.5" stroke="#000" stroke-width="1.25" stroke-dasharray="4.6 3.4"/>
<line x1="963.2" y1="332" x2="963.2" y2="554.7" stroke="#e81818" stroke-width="1.4" stroke-dasharray="4 3.5"/>
<polyline points="38,431.25 51,436.25 66,441.25 81,444.25 96,444.25 111,442.5 131,441.75 148.5,438 166,434.5 186,432 211,428.75 231,426.25 246,420 261,417.5 273.5,416.25 286,413 296,411.5 306,413 316,416.25 326,419.25 336,423.75 348.5,428.75 361,433.75 373.5,437.5 386,439.5 396,440 411,438 426,436.75 436,438 448.5,441.25 461,443.75 473.5,445.5 486,445.5 498.5,443.75 516,440 526,438 563.5,438 581,443 596,446.5 611,443 626,436.25 636,428.75 646,421.25 656,418 666,417.5 678.5,420.5 691,423.75 706,427 723.5,429 763.5,429 776,426.25 791,420.5 806,416.25 821,411.25 841,407.5 866,405 891,402.5 906,398.75 921,395 936,391.25 948.5,390 963.5,391.25 978.5,390 996,387.5 1016,387.5 1028.5,390 1046,403.75 1061,415 1078.5,426.25 1096,436.25 1131,436.25 1146,438 1163.5,433.75 1178.5,437.5 1218.5,437.5 1231,439.5 1246,443 1261,446.5 1278.5,446.5 1293.5,442 1311,438 1346,430 1361,424.5 1386,424.5 1406,426.75 1428.5,426.75 1440,423 1455,419.5 1470,417.5 1482.5,417.5 1492.5,421.25 1502.5,428.75 1512.5,436.25 1525,440.5 1540,443.25 1550,442 1562.5,438.75" fill="none" stroke="#f2f2d2" stroke-width="1.2" />
<polyline points="38,412 81,412 96,411.25 111,415 167.25,416.75 176,418 216,418 226,420 296,420 307.25,416.25 318.5,412.5 326,411.5 381,411.5 391,413 398.5,415 426,415.5 438.5,412.5 446,411.5 481,411.5 496,413.75 511,415.5 567.25,412.5 578.5,411.5 598.5,411.5 611,413.75 628.5,419.5 646,419.5 656,417.5 671,416.25 686,412.5 696,411.5 713.5,411.5 723.5,413 748.5,415 763.5,412.5 781,419.5 791,418 801,417.5 811,420 851,420 866,417 876,416.25 886,416.25 896,417.5 911,420 946,420 963.5,417.5 978.5,419.5 996,419.5 996,419.5 1021,418 1031,416.25 1046,412 1058.5,411.5 1096,411.5 1108.5,413 1146,415 1156,415 1163.5,416.25 1176,412.5 1183.5,411.5 1196,411.5 1208.5,413.75 1226,415 1251,413 1261,412 1278.5,411.5 1286,412.5 1296,416.25 1316,417 1331,420.5 1346,417.5 1361,420.5 1376,417 1396,415 1406,412.5 1413.5,411.5 1426,413.75 1436,417.5 1446,420.5 1450,418.75 1465,417 1482.5,417 1492.5,412.5 1500,411.5 1547.5,411.5 1557.5,413.75 1562.5,416.25" fill="none" stroke="#e8e800" stroke-width="1.2" />
<polyline points="38,415 78.84,415 95.51,395 112.18,415 395.57,415 412.24,405 428.91,415 478.92,415 495.59,395 512.26,415 595.61,415 612.28,405 628.95,415 745.64,415 762.31,410 778.98,415 945.68,415 962.35,435 979.02,415 995.69,415 1012.36,435 1029.03,415 1145.72,415 1162.39,405 1179.06,415 1195.73,415 1212.4,405 1229.07,415 1262.41,415 1279.08,395 1295.75,415 1412.44,415 1429.11,410 1445.78,415 1545.8,415 1562.47,405" fill="none" stroke="#000" stroke-width="2.2" stroke-linejoin="miter"/>
<polyline points="38,536.5 79,536.5 95.5,395.5 396,395.5 412.25,385.25 479.75,385.25 496,365.75 516,365.75 596.5,365.75 612.25,355 747.25,355 762.25,350 946,350 963,435.5 996,435.5 996,435.5 1013,456.25 1146,456.25 1162.25,405 1196,405 1212.25,395.5 1263,395.5 1279.75,375.5 1413.5,375.5 1428.5,370.5 1476,370.5 1547.5,370.5 1562.5,360.5" fill="none" stroke="#8e0000" stroke-width="3.4" stroke-linejoin="round"/>
<line x1="1562.47" y1="332" x2="1562.47" y2="554.7" stroke="#e0cc10" stroke-width="1.5" stroke-dasharray="4.4 2.9"/>
<ellipse cx="962.3" cy="436.3" rx="16" ry="11.2" fill="none" stroke="#ff0000" stroke-width="1.6"/>
<ellipse cx="1561.8" cy="360.5" rx="16.2" ry="12" fill="none" stroke="#22c832" stroke-width="2"/>
</g>
<line x1="1855" y1="334" x2="1855" y2="554.7" stroke="#e4e4e4" stroke-width="1.4" />
<line x1="1855" y1="545.5" x2="1859.5" y2="545.5" stroke="#e4e4e4" stroke-width="1.2" />
<line x1="1855" y1="535.5" x2="1859.5" y2="535.5" stroke="#e4e4e4" stroke-width="1.2" />
<line x1="1855" y1="525.5" x2="1859.5" y2="525.5" stroke="#e4e4e4" stroke-width="1.2" />
<line x1="1855" y1="505.5" x2="1859.5" y2="505.5" stroke="#e4e4e4" stroke-width="1.2" />
<line x1="1855" y1="495.5" x2="1859.5" y2="495.5" stroke="#e4e4e4" stroke-width="1.2" />
<line x1="1855" y1="485.5" x2="1859.5" y2="485.5" stroke="#e4e4e4" stroke-width="1.2" />
<line x1="1855" y1="475.5" x2="1859.5" y2="475.5" stroke="#e4e4e4" stroke-width="1.2" />
<line x1="1855" y1="455.5" x2="1859.5" y2="455.5" stroke="#e4e4e4" stroke-width="1.2" />
<line x1="1855" y1="445.5" x2="1859.5" y2="445.5" stroke="#e4e4e4" stroke-width="1.2" />
<line x1="1855" y1="435.5" x2="1859.5" y2="435.5" stroke="#e4e4e4" stroke-width="1.2" />
<line x1="1855" y1="425.5" x2="1859.5" y2="425.5" stroke="#e4e4e4" stroke-width="1.2" />
<line x1="1855" y1="405.5" x2="1859.5" y2="405.5" stroke="#e4e4e4" stroke-width="1.2" />
<line x1="1855" y1="395.5" x2="1859.5" y2="395.5" stroke="#e4e4e4" stroke-width="1.2" />
<line x1="1855" y1="385.5" x2="1859.5" y2="385.5" stroke="#e4e4e4" stroke-width="1.2" />
<line x1="1855" y1="375.5" x2="1859.5" y2="375.5" stroke="#e4e4e4" stroke-width="1.2" />
<line x1="1855" y1="355.5" x2="1859.5" y2="355.5" stroke="#e4e4e4" stroke-width="1.2" />
<line x1="1855" y1="345.5" x2="1859.5" y2="345.5" stroke="#e4e4e4" stroke-width="1.2" />
<line x1="1855" y1="335.5" x2="1859.5" y2="335.5" stroke="#e4e4e4" stroke-width="1.2" />
<line x1="1855" y1="365.7" x2="1865.5" y2="365.7" stroke="#e4e4e4" stroke-width="1.3" />
<line x1="1855" y1="415.5" x2="1865.5" y2="415.5" stroke="#e4e4e4" stroke-width="1.3" />
<line x1="1855" y1="467" x2="1865.5" y2="467" stroke="#e4e4e4" stroke-width="1.3" />
<line x1="1855" y1="516.8" x2="1865.5" y2="516.8" stroke="#e4e4e4" stroke-width="1.3" />
<text x="1912.6" y="372" text-anchor="end" font-size="15.5" fill="#e4e4e4">50</text>
<text x="1912.6" y="421.8" text-anchor="end" font-size="15.5" fill="#e4e4e4">0</text>
<text x="1912.6" y="473.3" text-anchor="end" font-size="15.5" fill="#e4e4e4">-50</text>
<text x="1912.6" y="523.1" text-anchor="end" font-size="15.5" fill="#e4e4e4">-100</text>
<g clip-path="url(#c4)">
<line x1="963.2" y1="588" x2="963.2" y2="901" stroke="#e81414" stroke-width="1.4" stroke-dasharray="4 3.5"/>
<rect x="38.5" y="625" width="14" height="22.17" fill="#ff6a20" />
<line x1="62.17" y1="640.83" x2="62.17" y2="648.33" stroke="#86a2c8" stroke-width="1.3" />
<rect x="55.77" y="644.27" width="12.8" height="3.47" fill="#000" stroke="#86a2c8" stroke-width="1.3"/>
<line x1="78.84" y1="643.33" x2="78.84" y2="655.83" stroke="#ff6a20" stroke-width="1.3" />
<rect x="71.84" y="643.33" width="14" height="11.33" fill="#ff6a20" />
<line x1="95.51" y1="651.33" x2="95.51" y2="657.5" stroke="#86a2c8" stroke-width="1.3" />
<rect x="89.11" y="653.1" width="12.8" height="2.13" fill="#000" stroke="#86a2c8" stroke-width="1.3"/>
<line x1="112.18" y1="642.17" x2="112.18" y2="657.5" stroke="#ff6a20" stroke-width="1.3" />
<rect x="105.18" y="654.67" width="14" height="2.83" fill="#ff6a20" />
<line x1="128.85" y1="650" x2="128.85" y2="660" stroke="#86a2c8" stroke-width="1.3" />
<rect x="121.85" y="653.33" width="14" height="2.5" fill="#86a2c8" />
<line x1="145.52" y1="651.33" x2="145.52" y2="659.17" stroke="#ff6a20" stroke-width="1.3" />
<rect x="138.52" y="653" width="14" height="1.4" fill="#ff6a20" />
<line x1="162.19" y1="652" x2="162.19" y2="658.33" stroke="#ff6a20" stroke-width="1.3" />
<rect x="155.19" y="654.67" width="14" height="3.67" fill="#ff6a20" />
<line x1="178.86" y1="650.83" x2="178.86" y2="662.5" stroke="#86a2c8" stroke-width="1.3" />
<rect x="172.46" y="654.27" width="12.8" height="4.63" fill="#000" stroke="#86a2c8" stroke-width="1.3"/>
<line x1="195.53" y1="643.33" x2="195.53" y2="655" stroke="#ff6a20" stroke-width="1.3" />
<rect x="188.53" y="652.17" width="14" height="1.5" fill="#ff6a20" />
<rect x="205.2" y="652.5" width="14" height="2.5" fill="#86a2c8" />
<line x1="228.87" y1="648.33" x2="228.87" y2="653.67" stroke="#86a2c8" stroke-width="1.3" />
<rect x="221.87" y="651.33" width="14" height="2.33" fill="#86a2c8" />
<line x1="245.54" y1="630" x2="245.54" y2="648.67" stroke="#86a2c8" stroke-width="1.3" />
<rect x="239.14" y="634.43" width="12.8" height="12.13" fill="#000" stroke="#86a2c8" stroke-width="1.3"/>
<line x1="262.21" y1="633.33" x2="262.21" y2="644.67" stroke="#ff6a20" stroke-width="1.3" />
<rect x="255.21" y="633.33" width="14" height="8.83" fill="#ff6a20" />
<line x1="278.88" y1="635" x2="278.88" y2="643.33" stroke="#86a2c8" stroke-width="1.3" />
<rect x="272.48" y="637.27" width="12.8" height="5.47" fill="#000" stroke="#86a2c8" stroke-width="1.3"/>
<line x1="295.55" y1="620.83" x2="295.55" y2="637" stroke="#86a2c8" stroke-width="1.3" />
<rect x="289.15" y="623.1" width="12.8" height="13.3" fill="#000" stroke="#86a2c8" stroke-width="1.3"/>
<line x1="312.22" y1="620.83" x2="312.22" y2="654.67" stroke="#ff6a20" stroke-width="1.3" />
<rect x="305.22" y="622.17" width="14" height="32.5" fill="#ff6a20" />
<line x1="328.89" y1="654.67" x2="328.89" y2="672" stroke="#ff6a20" stroke-width="1.3" />
<rect x="321.89" y="654.67" width="14" height="12.83" fill="#ff6a20" />
<line x1="345.56" y1="665.83" x2="345.56" y2="682" stroke="#ff6a20" stroke-width="1.3" />
<rect x="338.56" y="667.17" width="14" height="14.83" fill="#ff6a20" />
<line x1="362.23" y1="680" x2="362.23" y2="693.33" stroke="#ff6a20" stroke-width="1.3" />
<rect x="355.23" y="682.5" width="14" height="10.83" fill="#ff6a20" />
<line x1="378.9" y1="697.5" x2="378.9" y2="714.17" stroke="#ff6a20" stroke-width="1.3" />
<rect x="371.9" y="705" width="14" height="7" fill="#ff6a20" />
<line x1="395.57" y1="694.17" x2="395.57" y2="713.33" stroke="#86a2c8" stroke-width="1.3" />
<rect x="389.17" y="697.27" width="12.8" height="15.47" fill="#000" stroke="#86a2c8" stroke-width="1.3"/>
<line x1="412.24" y1="690.83" x2="412.24" y2="700" stroke="#ff6a20" stroke-width="1.3" />
<rect x="405.24" y="694.67" width="14" height="1.4" fill="#ff6a20" />
<line x1="428.91" y1="692.5" x2="428.91" y2="707" stroke="#ff6a20" stroke-width="1.3" />
<rect x="421.91" y="696.17" width="14" height="10.83" fill="#ff6a20" />
<line x1="445.58" y1="700" x2="445.58" y2="737.5" stroke="#ff6a20" stroke-width="1.3" />
<rect x="438.58" y="701.17" width="14" height="27.17" fill="#ff6a20" />
<line x1="462.25" y1="721.17" x2="462.25" y2="732.5" stroke="#ff6a20" stroke-width="1.3" />
<rect x="455.25" y="727.5" width="14" height="1.4" fill="#ff6a20" />
<line x1="478.92" y1="727.5" x2="478.92" y2="740" stroke="#ff6a20" stroke-width="1.3" />
<rect x="471.92" y="730" width="14" height="3.33" fill="#ff6a20" />
<line x1="495.59" y1="723.33" x2="495.59" y2="734.67" stroke="#86a2c8" stroke-width="1.3" />
<rect x="489.19" y="731.1" width="12.8" height="2.97" fill="#000" stroke="#86a2c8" stroke-width="1.3"/>
<line x1="512.26" y1="715" x2="512.26" y2="732.5" stroke="#86a2c8" stroke-width="1.3" />
<rect x="505.26" y="722.17" width="14" height="7.5" fill="#86a2c8" />
<line x1="528.93" y1="725" x2="528.93" y2="736.33" stroke="#ff6a20" stroke-width="1.3" />
<rect x="521.93" y="728.67" width="14" height="3.33" fill="#ff6a20" />
<line x1="545.6" y1="728.33" x2="545.6" y2="743.67" stroke="#ff6a20" stroke-width="1.3" />
<rect x="538.6" y="732.17" width="14" height="8.67" fill="#ff6a20" />
<line x1="562.27" y1="730.83" x2="562.27" y2="744.67" stroke="#ff6a20" stroke-width="1.3" />
<rect x="555.27" y="740.83" width="14" height="3.83" fill="#ff6a20" />
<rect x="571.94" y="753.67" width="14" height="16" fill="#ff6a20" />
<line x1="595.61" y1="758.33" x2="595.61" y2="770.83" stroke="#86a2c8" stroke-width="1.3" />
<rect x="589.21" y="768.1" width="12.8" height="2.13" fill="#000" stroke="#86a2c8" stroke-width="1.3"/>
<line x1="612.28" y1="746.33" x2="612.28" y2="768.33" stroke="#86a2c8" stroke-width="1.3" />
<rect x="605.88" y="750.6" width="12.8" height="17.13" fill="#000" stroke="#86a2c8" stroke-width="1.3"/>
<line x1="628.95" y1="737.5" x2="628.95" y2="752.5" stroke="#86a2c8" stroke-width="1.3" />
<rect x="622.55" y="739.27" width="12.8" height="10.97" fill="#000" stroke="#86a2c8" stroke-width="1.3"/>
<line x1="645.62" y1="713.33" x2="645.62" y2="735" stroke="#86a2c8" stroke-width="1.3" />
<rect x="639.22" y="719.77" width="12.8" height="5.47" fill="#000" stroke="#86a2c8" stroke-width="1.3"/>
<line x1="662.29" y1="713.33" x2="662.29" y2="742" stroke="#ff6a20" stroke-width="1.3" />
<rect x="655.29" y="718.67" width="14" height="19.67" fill="#ff6a20" />
<rect x="671.96" y="738.67" width="14" height="20" fill="#ff6a20" />
<line x1="695.63" y1="750.83" x2="695.63" y2="770" stroke="#ff6a20" stroke-width="1.3" />
<rect x="688.63" y="758.33" width="14" height="1.4" fill="#ff6a20" />
<line x1="712.3" y1="750.83" x2="712.3" y2="778.67" stroke="#86a2c8" stroke-width="1.3" />
<rect x="705.9" y="755.93" width="12.8" height="2.13" fill="#000" stroke="#86a2c8" stroke-width="1.3"/>
<line x1="728.97" y1="750.83" x2="728.97" y2="768.67" stroke="#ff6a20" stroke-width="1.3" />
<rect x="721.97" y="754.67" width="14" height="9" fill="#ff6a20" />
<line x1="745.64" y1="762" x2="745.64" y2="774.67" stroke="#ff6a20" stroke-width="1.3" />
<rect x="738.64" y="763.67" width="14" height="6" fill="#ff6a20" />
<line x1="762.31" y1="763.33" x2="762.31" y2="772.5" stroke="#86a2c8" stroke-width="1.3" />
<rect x="755.91" y="768.1" width="12.8" height="2.13" fill="#000" stroke="#86a2c8" stroke-width="1.3"/>
<line x1="778.98" y1="754.67" x2="778.98" y2="770" stroke="#86a2c8" stroke-width="1.3" />
<rect x="772.58" y="758.1" width="12.8" height="9.97" fill="#000" stroke="#86a2c8" stroke-width="1.3"/>
<line x1="795.65" y1="745.83" x2="795.65" y2="758.33" stroke="#86a2c8" stroke-width="1.3" />
<rect x="789.25" y="748.1" width="12.8" height="9.63" fill="#000" stroke="#86a2c8" stroke-width="1.3"/>
<rect x="805.92" y="733.1" width="12.8" height="14.63" fill="#000" stroke="#86a2c8" stroke-width="1.3"/>
<line x1="828.99" y1="728.33" x2="828.99" y2="734.17" stroke="#ff6a20" stroke-width="1.3" />
<rect x="821.99" y="730.83" width="14" height="1.4" fill="#ff6a20" />
<line x1="845.66" y1="722.5" x2="845.66" y2="750" stroke="#86a2c8" stroke-width="1.3" />
<rect x="839.26" y="723.1" width="12.8" height="19.63" fill="#000" stroke="#86a2c8" stroke-width="1.3"/>
<line x1="862.33" y1="717" x2="862.33" y2="745" stroke="#ff6a20" stroke-width="1.3" />
<rect x="855.33" y="722.17" width="14" height="9.83" fill="#ff6a20" />
<line x1="879" y1="722.5" x2="879" y2="735" stroke="#86a2c8" stroke-width="1.3" />
<rect x="872.6" y="730.1" width="12.8" height="2.63" fill="#000" stroke="#86a2c8" stroke-width="1.3"/>
<line x1="895.67" y1="718.33" x2="895.67" y2="731.33" stroke="#86a2c8" stroke-width="1.3" />
<rect x="889.27" y="720.93" width="12.8" height="8.13" fill="#000" stroke="#86a2c8" stroke-width="1.3"/>
<rect x="905.94" y="691.93" width="12.8" height="19.47" fill="#000" stroke="#86a2c8" stroke-width="1.3"/>
<line x1="929.01" y1="690.33" x2="929.01" y2="700" stroke="#86a2c8" stroke-width="1.3" />
<rect x="922.01" y="690.33" width="14" height="2.17" fill="#86a2c8" />
<line x1="945.68" y1="687.5" x2="945.68" y2="693.67" stroke="#86a2c8" stroke-width="1.3" />
<rect x="939.28" y="688.1" width="12.8" height="3.8" fill="#000" stroke="#86a2c8" stroke-width="1.3"/>
<rect x="955.35" y="687.83" width="14" height="1.4" fill="#ff6a20" />
<line x1="979.02" y1="662.5" x2="979.02" y2="680.5" stroke="#86a2c8" stroke-width="1.3" />
<rect x="972.62" y="669.77" width="12.8" height="10.13" fill="#000" stroke="#86a2c8" stroke-width="1.3"/>
<line x1="995.69" y1="665" x2="995.69" y2="678.67" stroke="#ff6a20" stroke-width="1.3" />
<rect x="988.69" y="669.17" width="14" height="1.4" fill="#ff6a20" />
<line x1="1012.36" y1="665.83" x2="1012.36" y2="673.33" stroke="#86a2c8" stroke-width="1.3" />
<rect x="1005.36" y="669.17" width="14" height="2.17" fill="#86a2c8" />
<rect x="1022.63" y="666.93" width="12.8" height="3.3" fill="#000" stroke="#86a2c8" stroke-width="1.3"/>
<line x1="1045.7" y1="703.67" x2="1045.7" y2="730.83" stroke="#ff6a20" stroke-width="1.3" />
<rect x="1038.7" y="703.67" width="14" height="26.33" fill="#ff6a20" />
<line x1="1062.37" y1="726.33" x2="1062.37" y2="732.5" stroke="#86a2c8" stroke-width="1.3" />
<rect x="1055.37" y="729.17" width="14" height="1.67" fill="#86a2c8" />
<line x1="1079.04" y1="723.33" x2="1079.04" y2="742" stroke="#ff6a20" stroke-width="1.3" />
<rect x="1072.04" y="730" width="14" height="12" fill="#ff6a20" />
<line x1="1095.71" y1="740.83" x2="1095.71" y2="762.5" stroke="#ff6a20" stroke-width="1.3" />
<rect x="1088.71" y="742.5" width="14" height="13.33" fill="#ff6a20" />
<line x1="1112.38" y1="743.33" x2="1112.38" y2="763.67" stroke="#86a2c8" stroke-width="1.3" />
<rect x="1105.98" y="745.93" width="12.8" height="6.8" fill="#000" stroke="#86a2c8" stroke-width="1.3"/>
<line x1="1129.05" y1="740.83" x2="1129.05" y2="751.33" stroke="#ff6a20" stroke-width="1.3" />
<rect x="1122.05" y="745" width="14" height="1.4" fill="#ff6a20" />
<line x1="1145.72" y1="743" x2="1145.72" y2="760.83" stroke="#ff6a20" stroke-width="1.3" />
<rect x="1138.72" y="746.17" width="14" height="12.17" fill="#ff6a20" />
<line x1="1162.39" y1="747.5" x2="1162.39" y2="765.83" stroke="#86a2c8" stroke-width="1.3" />
<rect x="1155.99" y="749.77" width="12.8" height="9.3" fill="#000" stroke="#86a2c8" stroke-width="1.3"/>
<line x1="1179.06" y1="742" x2="1179.06" y2="767.5" stroke="#ff6a20" stroke-width="1.3" />
<rect x="1172.06" y="756.33" width="14" height="9.5" fill="#ff6a20" />
<line x1="1195.73" y1="760" x2="1195.73" y2="770" stroke="#86a2c8" stroke-width="1.3" />
<rect x="1189.33" y="763.43" width="12.8" height="2.97" fill="#000" stroke="#86a2c8" stroke-width="1.3"/>
<line x1="1212.4" y1="749.67" x2="1212.4" y2="768.67" stroke="#ff6a20" stroke-width="1.3" />
<rect x="1205.4" y="762.5" width="14" height="4.5" fill="#ff6a20" />
<line x1="1229.07" y1="765.83" x2="1229.07" y2="778.33" stroke="#ff6a20" stroke-width="1.3" />
<rect x="1222.07" y="767.5" width="14" height="5" fill="#ff6a20" />
<line x1="1245.74" y1="782.5" x2="1245.74" y2="803.12" stroke="#ff6a20" stroke-width="1.3" />
<rect x="1238.74" y="782.5" width="14" height="14.62" fill="#ff6a20" />
<line x1="1262.41" y1="791.88" x2="1262.41" y2="803.5" stroke="#ff6a20" stroke-width="1.3" />
<rect x="1255.41" y="796" width="14" height="1.4" fill="#ff6a20" />
<line x1="1279.08" y1="788.12" x2="1279.08" y2="802.19" stroke="#86a2c8" stroke-width="1.3" />
<rect x="1272.68" y="790.98" width="12.8" height="6.3" fill="#000" stroke="#86a2c8" stroke-width="1.3"/>
<line x1="1295.75" y1="783.44" x2="1295.75" y2="793.75" stroke="#86a2c8" stroke-width="1.3" />
<rect x="1289.35" y="787.23" width="12.8" height="3.11" fill="#000" stroke="#86a2c8" stroke-width="1.3"/>
<line x1="1312.42" y1="779.69" x2="1312.42" y2="803.5" stroke="#86a2c8" stroke-width="1.3" />
<rect x="1306.02" y="784.98" width="12.8" height="12.3" fill="#000" stroke="#86a2c8" stroke-width="1.3"/>
<line x1="1329.09" y1="779.12" x2="1329.09" y2="794.69" stroke="#ff6a20" stroke-width="1.3" />
<rect x="1322.09" y="782.88" width="14" height="1.4" fill="#ff6a20" />
<line x1="1345.76" y1="784" x2="1345.76" y2="790.94" stroke="#ff6a20" stroke-width="1.3" />
<rect x="1338.76" y="784" width="14" height="1.88" fill="#ff6a20" />
<rect x="1356.03" y="773.35" width="12.8" height="12.68" fill="#000" stroke="#86a2c8" stroke-width="1.3"/>
<line x1="1379.1" y1="784.94" x2="1379.1" y2="800.88" stroke="#ff6a20" stroke-width="1.3" />
<rect x="1372.1" y="784.94" width="14" height="7.88" fill="#ff6a20" />
<line x1="1395.77" y1="784.75" x2="1395.77" y2="794.69" stroke="#ff6a20" stroke-width="1.3" />
<rect x="1388.77" y="791.5" width="14" height="2.25" fill="#ff6a20" />
<line x1="1412.44" y1="794.12" x2="1412.44" y2="807.81" stroke="#ff6a20" stroke-width="1.3" />
<rect x="1405.44" y="794.12" width="14" height="4.31" fill="#ff6a20" />
<line x1="1429.11" y1="789.06" x2="1429.11" y2="799.38" stroke="#86a2c8" stroke-width="1.3" />
<rect x="1422.71" y="794.91" width="12.8" height="3.86" fill="#000" stroke="#86a2c8" stroke-width="1.3"/>
<line x1="1445.78" y1="778.38" x2="1445.78" y2="788.12" stroke="#86a2c8" stroke-width="1.3" />
<rect x="1439.38" y="785.54" width="12.8" height="1.99" fill="#000" stroke="#86a2c8" stroke-width="1.3"/>
<line x1="1462.45" y1="780.25" x2="1462.45" y2="787.19" stroke="#ff6a20" stroke-width="1.3" />
<rect x="1455.45" y="783.44" width="14" height="1.4" fill="#ff6a20" />
<line x1="1479.12" y1="768.44" x2="1479.12" y2="812.5" stroke="#86a2c8" stroke-width="1.3" />
<rect x="1472.72" y="779.73" width="12.8" height="5.36" fill="#000" stroke="#86a2c8" stroke-width="1.3"/>
<line x1="1495.79" y1="775" x2="1495.79" y2="827.12" stroke="#ff6a20" stroke-width="1.3" />
<rect x="1488.79" y="777.25" width="14" height="49.88" fill="#ff6a20" />
<line x1="1512.46" y1="827.5" x2="1512.46" y2="844.75" stroke="#ff6a20" stroke-width="1.3" />
<rect x="1505.46" y="831.25" width="14" height="13.5" fill="#ff6a20" />
<line x1="1529.13" y1="835.94" x2="1529.13" y2="847.19" stroke="#86a2c8" stroke-width="1.3" />
<rect x="1522.73" y="840.85" width="12.8" height="3.86" fill="#000" stroke="#86a2c8" stroke-width="1.3"/>
<line x1="1545.8" y1="835.94" x2="1545.8" y2="844.75" stroke="#86a2c8" stroke-width="1.3" />
<rect x="1538.8" y="838.38" width="14" height="2.25" fill="#86a2c8" />
<line x1="1562.47" y1="832.19" x2="1562.47" y2="839.31" stroke="#86a2c8" stroke-width="1.3" />
<rect x="1556.07" y="835.6" width="12.8" height="3.11" fill="#000" stroke="#86a2c8" stroke-width="1.3"/>
<polyline points="37.5,640 45.5,665 62.17,652 78.84,664.17 95.51,657.5 112.18,659.17 128.85,657.5 145.52,659.17 162.19,663.33 178.86,657.5 195.53,657 212.2,655 228.87,653.67 245.54,631.67 262.21,647.17 278.88,640 295.55,624.67 312.22,670.83 328.89,685.83 345.56,696.67 362.23,704.67 378.9,726.67 395.57,700.83 412.24,700.33 428.91,715.83 445.58,745.33 462.25,740 478.92,743.33 495.59,734.17 512.26,732.5 528.93,739.17 545.6,749.17 562.27,752 578.94,784.17 595.61,774.67 612.28,750 628.95,736.67 645.62,718 662.29,747.5 678.96,775.33 695.63,773 712.3,764.17 728.97,772.5 745.64,780.33 762.31,775.33 778.98,759.17 795.65,748.33 812.32,732.5 828.99,735.33 845.66,726.67 862.33,740.83 879,735.33 895.67,727 912.34,688.67 929.01,694.17 945.68,691.33 962.35,693 979.02,667 995.69,672.5 1012.36,674.17 1029.03,670.33 1045.7,755 1062.37,741.67 1079.04,753.33 1095.71,769.17 1112.38,750.33 1129.05,751.67 1145.72,769.17 1162.39,755.33 1179.06,775.33 1195.73,770.33 1212.4,775.33 1229.07,780.33 1245.74,811.56 1262.41,806.88 1279.08,795.62 1295.75,790.94 1312.42,790.38 1329.09,790.94 1345.76,793.38 1362.43,775.38 1379.1,802.75 1395.77,801.62 1412.44,807.81 1429.11,799 1445.78,787.19 1462.45,789.06 1479.12,785.31 1495.79,851.88 1512.46,868.38 1529.13,852.81 1545.8,845.88 1562.47,837.81" fill="none" stroke="#1eb41e" stroke-width="1.2" stroke-linejoin="round"/>
<polyline points="37.5,630 45.5,655 62.17,643.67 78.84,654.17 95.51,647.5 112.18,651.67 128.85,650 145.52,652.5 162.19,654.67 178.86,650 195.53,650 212.2,649.17 228.87,647.5 245.54,624.17 262.21,640 278.88,631.33 295.55,614.67 312.22,657.5 328.89,670 345.56,680 362.23,688.33 378.9,713.33 395.57,688 412.24,689.17 428.91,704.17 445.58,729.17 462.25,725.33 478.92,728 495.59,720.33 512.26,722.83 528.93,729.17 545.6,739.17 562.27,740.83 578.94,773 595.61,764.67 612.28,737.5 628.95,726.67 645.62,705.33 662.29,733.33 678.96,759.17 695.63,754.17 712.3,746.33 728.97,756.67 745.64,765 762.31,763.33 778.98,748.33 795.65,739.17 812.32,721.33 828.99,726.67 845.66,715.33 862.33,727 879,721.33 895.67,710.83 912.34,675.33 929.01,684.17 945.68,683 962.35,685.33 979.02,660.33 995.69,665.33 1012.36,665.33 1029.03,662.5 1045.7,745 1062.37,733.67 1079.04,742.5 1095.71,754.17 1112.38,738 1129.05,738 1145.72,756.67 1162.39,744.17 1179.06,763.33 1195.73,756.67 1212.4,760.83 1229.07,768.33 1245.74,800.88 1262.41,795.25 1279.08,784.38 1295.75,779.12 1312.42,779.12 1329.09,779.12 1345.76,781 1362.43,764.12 1379.1,794.12 1395.77,792.81 1412.44,796 1429.11,788.12 1445.78,776.5 1462.45,780.25 1479.12,772.19 1495.79,827.5 1512.46,845.31 1529.13,829 1545.8,827.5 1562.47,829" fill="none" stroke="#f00000" stroke-width="1.2" stroke-linejoin="round"/>
<path d="M959.700 625.200h6v12h6.300l-9.300 10.200l-9.300 -10.200h6.300z" fill="#ff0000"/>
<line x1="1562.47" y1="588" x2="1562.47" y2="900" stroke="#dcc414" stroke-width="1.8" stroke-dasharray="4.4 2.9"/>
<rect x="1552.4" y="856.6" width="19" height="8.8" fill="#f0e000" stroke="#fff27a" stroke-width=".8"/>
<text x="1562" y="863.8" text-anchor="middle" font-size="7" font-weight="bold" fill="#7a6a00" textLength="15">EXIT</text>
<rect x="1560.6" y="865.4" width="2.2" height="14.8" fill="#ffee00" />
<line x1="35" y1="893.1" x2="42.5" y2="900.6" stroke="#e00000" stroke-width="1.4" />
<line x1="45" y1="893.1" x2="52.5" y2="900.6" stroke="#e00000" stroke-width="1.4" />
<line x1="55" y1="893.1" x2="62.5" y2="900.6" stroke="#e00000" stroke-width="1.4" />
<line x1="65" y1="893.1" x2="72.5" y2="900.6" stroke="#e00000" stroke-width="1.4" />
<line x1="75" y1="893.1" x2="82.5" y2="900.6" stroke="#e00000" stroke-width="1.4" />
<line x1="85" y1="893.1" x2="92.5" y2="900.6" stroke="#e00000" stroke-width="1.4" />
<line x1="95" y1="893.1" x2="102.5" y2="900.6" stroke="#e00000" stroke-width="1.4" />
<line x1="105" y1="893.1" x2="112.5" y2="900.6" stroke="#e00000" stroke-width="1.4" />
<line x1="115" y1="893.1" x2="122.5" y2="900.6" stroke="#e00000" stroke-width="1.4" />
<line x1="125" y1="893.1" x2="132.5" y2="900.6" stroke="#e00000" stroke-width="1.4" />
<line x1="325" y1="893.1" x2="332.5" y2="900.6" stroke="#e00000" stroke-width="1.4" />
<line x1="335" y1="893.1" x2="342.5" y2="900.6" stroke="#e00000" stroke-width="1.4" />
<line x1="345" y1="893.1" x2="352.5" y2="900.6" stroke="#e00000" stroke-width="1.4" />
<line x1="355" y1="893.1" x2="362.5" y2="900.6" stroke="#e00000" stroke-width="1.4" />
<line x1="365" y1="893.1" x2="372.5" y2="900.6" stroke="#e00000" stroke-width="1.4" />
<line x1="375" y1="893.1" x2="382.5" y2="900.6" stroke="#e00000" stroke-width="1.4" />
<line x1="385" y1="893.1" x2="392.5" y2="900.6" stroke="#e00000" stroke-width="1.4" />
<line x1="395" y1="893.1" x2="402.5" y2="900.6" stroke="#e00000" stroke-width="1.4" />
<line x1="405" y1="893.1" x2="412.5" y2="900.6" stroke="#e00000" stroke-width="1.4" />
<line x1="415" y1="893.1" x2="422.5" y2="900.6" stroke="#e00000" stroke-width="1.4" />
<line x1="425" y1="893.1" x2="432.5" y2="900.6" stroke="#e00000" stroke-width="1.4" />
<line x1="435" y1="893.1" x2="442.5" y2="900.6" stroke="#e00000" stroke-width="1.4" />
<line x1="445" y1="893.1" x2="452.5" y2="900.6" stroke="#e00000" stroke-width="1.4" />
<line x1="455" y1="893.1" x2="462.5" y2="900.6" stroke="#e00000" stroke-width="1.4" />
<line x1="465" y1="893.1" x2="472.5" y2="900.6" stroke="#e00000" stroke-width="1.4" />
<line x1="475" y1="893.1" x2="482.5" y2="900.6" stroke="#e00000" stroke-width="1.4" />
<line x1="485" y1="893.1" x2="492.5" y2="900.6" stroke="#e00000" stroke-width="1.4" />
<line x1="495" y1="893.1" x2="502.5" y2="900.6" stroke="#e00000" stroke-width="1.4" />
<line x1="505" y1="893.1" x2="512.5" y2="900.6" stroke="#e00000" stroke-width="1.4" />
<line x1="515" y1="893.1" x2="522.5" y2="900.6" stroke="#e00000" stroke-width="1.4" />
<line x1="525" y1="893.1" x2="532.5" y2="900.6" stroke="#e00000" stroke-width="1.4" />
<line x1="535" y1="893.1" x2="542.5" y2="900.6" stroke="#e00000" stroke-width="1.4" />
<line x1="545" y1="893.1" x2="552.5" y2="900.6" stroke="#e00000" stroke-width="1.4" />
<line x1="555" y1="893.1" x2="562.5" y2="900.6" stroke="#e00000" stroke-width="1.4" />
<line x1="565" y1="893.1" x2="572.5" y2="900.6" stroke="#e00000" stroke-width="1.4" />
<line x1="575" y1="893.1" x2="582.5" y2="900.6" stroke="#e00000" stroke-width="1.4" />
<line x1="585" y1="893.1" x2="592.5" y2="900.6" stroke="#e00000" stroke-width="1.4" />
<line x1="595" y1="893.1" x2="602.5" y2="900.6" stroke="#e00000" stroke-width="1.4" />
<line x1="605" y1="893.1" x2="612.5" y2="900.6" stroke="#e00000" stroke-width="1.4" />
<line x1="615" y1="893.1" x2="622.5" y2="900.6" stroke="#e00000" stroke-width="1.4" />
<line x1="625" y1="893.1" x2="632.5" y2="900.6" stroke="#e00000" stroke-width="1.4" />
<line x1="635" y1="893.1" x2="642.5" y2="900.6" stroke="#e00000" stroke-width="1.4" />
<line x1="645" y1="893.1" x2="652.5" y2="900.6" stroke="#e00000" stroke-width="1.4" />
<line x1="655" y1="893.1" x2="662.5" y2="900.6" stroke="#e00000" stroke-width="1.4" />
<line x1="665" y1="893.1" x2="672.5" y2="900.6" stroke="#e00000" stroke-width="1.4" />
<line x1="675" y1="893.1" x2="682.5" y2="900.6" stroke="#e00000" stroke-width="1.4" />
<line x1="685" y1="893.1" x2="692.5" y2="900.6" stroke="#e00000" stroke-width="1.4" />
<line x1="695" y1="893.1" x2="702.5" y2="900.6" stroke="#e00000" stroke-width="1.4" />
<line x1="705" y1="893.1" x2="712.5" y2="900.6" stroke="#e00000" stroke-width="1.4" />
<line x1="715" y1="893.1" x2="722.5" y2="900.6" stroke="#e00000" stroke-width="1.4" />
<line x1="725" y1="893.1" x2="732.5" y2="900.6" stroke="#e00000" stroke-width="1.4" />
<line x1="735" y1="893.1" x2="742.5" y2="900.6" stroke="#e00000" stroke-width="1.4" />
<line x1="745" y1="893.1" x2="752.5" y2="900.6" stroke="#e00000" stroke-width="1.4" />
<line x1="755" y1="893.1" x2="762.5" y2="900.6" stroke="#e00000" stroke-width="1.4" />
<line x1="765" y1="893.1" x2="772.5" y2="900.6" stroke="#e00000" stroke-width="1.4" />
<line x1="775" y1="893.1" x2="782.5" y2="900.6" stroke="#e00000" stroke-width="1.4" />
<line x1="785" y1="893.1" x2="792.5" y2="900.6" stroke="#e00000" stroke-width="1.4" />
<line x1="795" y1="893.1" x2="802.5" y2="900.6" stroke="#e00000" stroke-width="1.4" />
<line x1="805" y1="893.1" x2="812.5" y2="900.6" stroke="#e00000" stroke-width="1.4" />
<line x1="815" y1="893.1" x2="822.5" y2="900.6" stroke="#e00000" stroke-width="1.4" />
<line x1="825" y1="893.1" x2="832.5" y2="900.6" stroke="#e00000" stroke-width="1.4" />
<line x1="835" y1="893.1" x2="842.5" y2="900.6" stroke="#e00000" stroke-width="1.4" />
<line x1="845" y1="893.1" x2="852.5" y2="900.6" stroke="#e00000" stroke-width="1.4" />
<line x1="855" y1="893.1" x2="862.5" y2="900.6" stroke="#e00000" stroke-width="1.4" />
<line x1="865" y1="893.1" x2="872.5" y2="900.6" stroke="#e00000" stroke-width="1.4" />
<line x1="875" y1="893.1" x2="882.5" y2="900.6" stroke="#e00000" stroke-width="1.4" />
<line x1="885" y1="893.1" x2="892.5" y2="900.6" stroke="#e00000" stroke-width="1.4" />
<line x1="895" y1="893.1" x2="902.5" y2="900.6" stroke="#e00000" stroke-width="1.4" />
<line x1="905" y1="893.1" x2="912.5" y2="900.6" stroke="#e00000" stroke-width="1.4" />
<line x1="915" y1="893.1" x2="922.5" y2="900.6" stroke="#e00000" stroke-width="1.4" />
<line x1="925" y1="893.1" x2="932.5" y2="900.6" stroke="#e00000" stroke-width="1.4" />
<line x1="935" y1="893.1" x2="942.5" y2="900.6" stroke="#e00000" stroke-width="1.4" />
<line x1="945" y1="893.1" x2="952.5" y2="900.6" stroke="#e00000" stroke-width="1.4" />
<line x1="955" y1="893.1" x2="962.5" y2="900.6" stroke="#e00000" stroke-width="1.4" />
<line x1="965" y1="893.1" x2="970" y2="898.1" stroke="#e00000" stroke-width="1.4" />
<line x1="1045" y1="893.1" x2="1052.5" y2="900.6" stroke="#e00000" stroke-width="1.4" />
<line x1="1055" y1="893.1" x2="1062.5" y2="900.6" stroke="#e00000" stroke-width="1.4" />
<line x1="1065" y1="893.1" x2="1072.5" y2="900.6" stroke="#e00000" stroke-width="1.4" />
<line x1="1075" y1="893.1" x2="1082.5" y2="900.6" stroke="#e00000" stroke-width="1.4" />
<line x1="1085" y1="893.1" x2="1092.5" y2="900.6" stroke="#e00000" stroke-width="1.4" />
<line x1="1095" y1="893.1" x2="1102.5" y2="900.6" stroke="#e00000" stroke-width="1.4" />
<line x1="1105" y1="893.1" x2="1112.5" y2="900.6" stroke="#e00000" stroke-width="1.4" />
<line x1="1115" y1="893.1" x2="1122.5" y2="900.6" stroke="#e00000" stroke-width="1.4" />
<line x1="1125" y1="893.1" x2="1132.5" y2="900.6" stroke="#e00000" stroke-width="1.4" />
<line x1="1135" y1="893.1" x2="1142.5" y2="900.6" stroke="#e00000" stroke-width="1.4" />
<line x1="1145" y1="893.1" x2="1152.5" y2="900.6" stroke="#e00000" stroke-width="1.4" />
<line x1="1155" y1="893.1" x2="1162.5" y2="900.6" stroke="#e00000" stroke-width="1.4" />
<line x1="1165" y1="893.1" x2="1172.5" y2="900.6" stroke="#e00000" stroke-width="1.4" />
<line x1="1175" y1="893.1" x2="1182.5" y2="900.6" stroke="#e00000" stroke-width="1.4" />
<line x1="1185" y1="893.1" x2="1192.5" y2="900.6" stroke="#e00000" stroke-width="1.4" />
<line x1="1195" y1="893.1" x2="1202.5" y2="900.6" stroke="#e00000" stroke-width="1.4" />
<line x1="1205" y1="893.1" x2="1212.5" y2="900.6" stroke="#e00000" stroke-width="1.4" />
<line x1="1215" y1="893.1" x2="1222.5" y2="900.6" stroke="#e00000" stroke-width="1.4" />
<line x1="1225" y1="893.1" x2="1232.5" y2="900.6" stroke="#e00000" stroke-width="1.4" />
<line x1="1235" y1="893.1" x2="1242.5" y2="900.6" stroke="#e00000" stroke-width="1.4" />
<line x1="1245" y1="893.1" x2="1252.5" y2="900.6" stroke="#e00000" stroke-width="1.4" />
<line x1="1255" y1="893.1" x2="1262.5" y2="900.6" stroke="#e00000" stroke-width="1.4" />
<line x1="1265" y1="893.1" x2="1272.5" y2="900.6" stroke="#e00000" stroke-width="1.4" />
<line x1="1275" y1="893.1" x2="1282.5" y2="900.6" stroke="#e00000" stroke-width="1.4" />
<line x1="1285" y1="893.1" x2="1292.5" y2="900.6" stroke="#e00000" stroke-width="1.4" />
<line x1="1295" y1="893.1" x2="1302.5" y2="900.6" stroke="#e00000" stroke-width="1.4" />
<line x1="1305" y1="893.1" x2="1312.5" y2="900.6" stroke="#e00000" stroke-width="1.4" />
<line x1="1315" y1="893.1" x2="1322.5" y2="900.6" stroke="#e00000" stroke-width="1.4" />
<line x1="1325" y1="893.1" x2="1332.5" y2="900.6" stroke="#e00000" stroke-width="1.4" />
<line x1="1335" y1="893.1" x2="1342.5" y2="900.6" stroke="#e00000" stroke-width="1.4" />
<line x1="1345" y1="893.1" x2="1352.5" y2="900.6" stroke="#e00000" stroke-width="1.4" />
<line x1="1355" y1="893.1" x2="1362.5" y2="900.6" stroke="#e00000" stroke-width="1.4" />
<line x1="1365" y1="893.1" x2="1372.5" y2="900.6" stroke="#e00000" stroke-width="1.4" />
<line x1="1375" y1="893.1" x2="1382.5" y2="900.6" stroke="#e00000" stroke-width="1.4" />
<line x1="1385" y1="893.1" x2="1392.5" y2="900.6" stroke="#e00000" stroke-width="1.4" />
<line x1="1395" y1="893.1" x2="1402.5" y2="900.6" stroke="#e00000" stroke-width="1.4" />
<line x1="1405" y1="893.1" x2="1412.5" y2="900.6" stroke="#e00000" stroke-width="1.4" />
<line x1="1415" y1="893.1" x2="1422.5" y2="900.6" stroke="#e00000" stroke-width="1.4" />
<line x1="1425" y1="893.1" x2="1432.5" y2="900.6" stroke="#e00000" stroke-width="1.4" />
<line x1="1435" y1="893.1" x2="1442.5" y2="900.6" stroke="#e00000" stroke-width="1.4" />
<line x1="1445" y1="893.1" x2="1452.5" y2="900.6" stroke="#e00000" stroke-width="1.4" />
<line x1="1455" y1="893.1" x2="1462.5" y2="900.6" stroke="#e00000" stroke-width="1.4" />
<line x1="1465" y1="893.1" x2="1472.5" y2="900.6" stroke="#e00000" stroke-width="1.4" />
<line x1="1475" y1="893.1" x2="1482.5" y2="900.6" stroke="#e00000" stroke-width="1.4" />
<line x1="1485" y1="893.1" x2="1492.5" y2="900.6" stroke="#e00000" stroke-width="1.4" />
<line x1="1495" y1="893.1" x2="1502.5" y2="900.6" stroke="#e00000" stroke-width="1.4" />
<line x1="1505" y1="893.1" x2="1512.5" y2="900.6" stroke="#e00000" stroke-width="1.4" />
<line x1="1515" y1="893.1" x2="1522.5" y2="900.6" stroke="#e00000" stroke-width="1.4" />
<line x1="1525" y1="893.1" x2="1532.5" y2="900.6" stroke="#e00000" stroke-width="1.4" />
<line x1="1535" y1="893.1" x2="1542.5" y2="900.6" stroke="#e00000" stroke-width="1.4" />
<line x1="1545" y1="893.1" x2="1552.5" y2="900.6" stroke="#e00000" stroke-width="1.4" />
<line x1="1555" y1="893.1" x2="1562.5" y2="900.6" stroke="#e00000" stroke-width="1.4" />
<line x1="1565" y1="893.1" x2="1572.5" y2="900.6" stroke="#e00000" stroke-width="1.4" />
<line x1="1037.5" y1="896.4" x2="1042" y2="900.6" stroke="#e00000" stroke-width="1.4" />
<line x1="1575" y1="893.1" x2="1578.5" y2="896.6" stroke="#e00000" stroke-width="1.4" />
<line x1="972.5" y1="900.6" x2="980" y2="893.1" stroke="#00a000" stroke-width="1.4" />
<line x1="982.5" y1="900.6" x2="990" y2="893.1" stroke="#00a000" stroke-width="1.4" />
<line x1="992.5" y1="900.6" x2="1000" y2="893.1" stroke="#00a000" stroke-width="1.4" />
<line x1="1002.5" y1="900.6" x2="1010" y2="893.1" stroke="#00a000" stroke-width="1.4" />
<line x1="1012.5" y1="900.6" x2="1020" y2="893.1" stroke="#00a000" stroke-width="1.4" />
<line x1="1022.5" y1="900.6" x2="1030" y2="893.1" stroke="#00a000" stroke-width="1.4" />
<line x1="1032.5" y1="900.6" x2="1037" y2="896.4" stroke="#00a000" stroke-width="1.4" />
<line x1="136" y1="900.4" x2="320" y2="900.4" stroke="#ffff00" stroke-width="1.6" />
<line x1="81" y1="894.2" x2="87" y2="894.2" stroke="#0000e0" stroke-width="1.3" />
<line x1="223" y1="894.2" x2="229" y2="894.2" stroke="#0000e0" stroke-width="1.3" />
<line x1="639" y1="894.2" x2="645" y2="894.2" stroke="#0000e0" stroke-width="1.3" />
<line x1="998.5" y1="894.2" x2="1004.5" y2="894.2" stroke="#0000e0" stroke-width="1.3" />
<line x1="1303" y1="894.2" x2="1309" y2="894.2" stroke="#0000e0" stroke-width="1.3" />
</g>
<line x1="1854.6" y1="588.6" x2="1854.6" y2="893.5" stroke="#e4e4e4" stroke-width="1.4" />
<line x1="1855" y1="892.9" x2="1859" y2="892.9" stroke="#e4e4e4" stroke-width="1.3" />
<line x1="1855" y1="887.9" x2="1859" y2="887.9" stroke="#e4e4e4" stroke-width="1.3" />
<line x1="1855" y1="882.9" x2="1859" y2="882.9" stroke="#e4e4e4" stroke-width="1.3" />
<line x1="1855" y1="877.9" x2="1859" y2="877.9" stroke="#e4e4e4" stroke-width="1.3" />
<line x1="1855" y1="867.9" x2="1859" y2="867.9" stroke="#e4e4e4" stroke-width="1.3" />
<line x1="1855" y1="862.9" x2="1859" y2="862.9" stroke="#e4e4e4" stroke-width="1.3" />
<line x1="1855" y1="857.9" x2="1859" y2="857.9" stroke="#e4e4e4" stroke-width="1.3" />
<line x1="1855" y1="852.9" x2="1859" y2="852.9" stroke="#e4e4e4" stroke-width="1.3" />
<line x1="1855" y1="842.9" x2="1859" y2="842.9" stroke="#e4e4e4" stroke-width="1.3" />
<line x1="1855" y1="837.9" x2="1859" y2="837.9" stroke="#e4e4e4" stroke-width="1.3" />
<line x1="1855" y1="832.9" x2="1859" y2="832.9" stroke="#e4e4e4" stroke-width="1.3" />
<line x1="1855" y1="827.9" x2="1859" y2="827.9" stroke="#e4e4e4" stroke-width="1.3" />
<line x1="1855" y1="817.9" x2="1859" y2="817.9" stroke="#e4e4e4" stroke-width="1.3" />
<line x1="1855" y1="812.9" x2="1859" y2="812.9" stroke="#e4e4e4" stroke-width="1.3" />
<line x1="1855" y1="807.9" x2="1859" y2="807.9" stroke="#e4e4e4" stroke-width="1.3" />
<line x1="1855" y1="802.9" x2="1859" y2="802.9" stroke="#e4e4e4" stroke-width="1.3" />
<line x1="1855" y1="792.9" x2="1859" y2="792.9" stroke="#e4e4e4" stroke-width="1.3" />
<line x1="1855" y1="787.9" x2="1859" y2="787.9" stroke="#e4e4e4" stroke-width="1.3" />
<line x1="1855" y1="782.9" x2="1859" y2="782.9" stroke="#e4e4e4" stroke-width="1.3" />
<line x1="1855" y1="777.9" x2="1859" y2="777.9" stroke="#e4e4e4" stroke-width="1.3" />
<line x1="1855" y1="767.9" x2="1859" y2="767.9" stroke="#e4e4e4" stroke-width="1.3" />
<line x1="1855" y1="762.9" x2="1859" y2="762.9" stroke="#e4e4e4" stroke-width="1.3" />
<line x1="1855" y1="757.9" x2="1859" y2="757.9" stroke="#e4e4e4" stroke-width="1.3" />
<line x1="1855" y1="752.9" x2="1859" y2="752.9" stroke="#e4e4e4" stroke-width="1.3" />
<line x1="1855" y1="742.9" x2="1859" y2="742.9" stroke="#e4e4e4" stroke-width="1.3" />
<line x1="1855" y1="737.9" x2="1859" y2="737.9" stroke="#e4e4e4" stroke-width="1.3" />
<line x1="1855" y1="732.9" x2="1859" y2="732.9" stroke="#e4e4e4" stroke-width="1.3" />
<line x1="1855" y1="727.9" x2="1859" y2="727.9" stroke="#e4e4e4" stroke-width="1.3" />
<line x1="1855" y1="717.9" x2="1859" y2="717.9" stroke="#e4e4e4" stroke-width="1.3" />
<line x1="1855" y1="712.9" x2="1859" y2="712.9" stroke="#e4e4e4" stroke-width="1.3" />
<line x1="1855" y1="707.9" x2="1859" y2="707.9" stroke="#e4e4e4" stroke-width="1.3" />
<line x1="1855" y1="702.9" x2="1859" y2="702.9" stroke="#e4e4e4" stroke-width="1.3" />
<line x1="1855" y1="692.9" x2="1859" y2="692.9" stroke="#e4e4e4" stroke-width="1.3" />
<line x1="1855" y1="687.9" x2="1859" y2="687.9" stroke="#e4e4e4" stroke-width="1.3" />
<line x1="1855" y1="682.9" x2="1859" y2="682.9" stroke="#e4e4e4" stroke-width="1.3" />
<line x1="1855" y1="677.9" x2="1859" y2="677.9" stroke="#e4e4e4" stroke-width="1.3" />
<line x1="1855" y1="667.9" x2="1859" y2="667.9" stroke="#e4e4e4" stroke-width="1.3" />
<line x1="1855" y1="662.9" x2="1859" y2="662.9" stroke="#e4e4e4" stroke-width="1.3" />
<line x1="1855" y1="657.9" x2="1859" y2="657.9" stroke="#e4e4e4" stroke-width="1.3" />
<line x1="1855" y1="652.9" x2="1859" y2="652.9" stroke="#e4e4e4" stroke-width="1.3" />
<line x1="1855" y1="642.9" x2="1859" y2="642.9" stroke="#e4e4e4" stroke-width="1.3" />
<line x1="1855" y1="637.9" x2="1859" y2="637.9" stroke="#e4e4e4" stroke-width="1.3" />
<line x1="1855" y1="632.9" x2="1859" y2="632.9" stroke="#e4e4e4" stroke-width="1.3" />
<line x1="1855" y1="627.9" x2="1859" y2="627.9" stroke="#e4e4e4" stroke-width="1.3" />
<line x1="1855" y1="617.9" x2="1859" y2="617.9" stroke="#e4e4e4" stroke-width="1.3" />
<line x1="1855" y1="612.9" x2="1859" y2="612.9" stroke="#e4e4e4" stroke-width="1.3" />
<line x1="1855" y1="607.9" x2="1859" y2="607.9" stroke="#e4e4e4" stroke-width="1.3" />
<line x1="1855" y1="602.9" x2="1859" y2="602.9" stroke="#e4e4e4" stroke-width="1.3" />
<line x1="1855" y1="592.9" x2="1859" y2="592.9" stroke="#e4e4e4" stroke-width="1.3" />
<line x1="1855" y1="872.9" x2="1865.5" y2="872.9" stroke="#e4e4e4" stroke-width="1.3" />
<line x1="1855" y1="847.9" x2="1865.5" y2="847.9" stroke="#e4e4e4" stroke-width="1.3" />
<line x1="1855" y1="822.9" x2="1865.5" y2="822.9" stroke="#e4e4e4" stroke-width="1.3" />
<line x1="1855" y1="797.9" x2="1865.5" y2="797.9" stroke="#e4e4e4" stroke-width="1.3" />
<line x1="1855" y1="772.9" x2="1865.5" y2="772.9" stroke="#e4e4e4" stroke-width="1.3" />
<line x1="1855" y1="747.9" x2="1865.5" y2="747.9" stroke="#e4e4e4" stroke-width="1.3" />
<line x1="1855" y1="722.9" x2="1865.5" y2="722.9" stroke="#e4e4e4" stroke-width="1.3" />
<line x1="1855" y1="697.9" x2="1865.5" y2="697.9" stroke="#e4e4e4" stroke-width="1.3" />
<line x1="1855" y1="672.9" x2="1865.5" y2="672.9" stroke="#e4e4e4" stroke-width="1.3" />
<line x1="1855" y1="647.9" x2="1865.5" y2="647.9" stroke="#e4e4e4" stroke-width="1.3" />
<line x1="1855" y1="622.9" x2="1865.5" y2="622.9" stroke="#e4e4e4" stroke-width="1.3" />
<line x1="1855" y1="597.9" x2="1865.5" y2="597.9" stroke="#e4e4e4" stroke-width="1.3" />
<text x="1912.6" y="878.9" text-anchor="end" font-size="15.5" fill="#e4e4e4">3700</text>
<text x="1912.6" y="853.9" text-anchor="end" font-size="15.5" fill="#e4e4e4">3750</text>
<text x="1912.6" y="828.9" text-anchor="end" font-size="15.5" fill="#e4e4e4">3800</text>
<text x="1912.6" y="803.9" text-anchor="end" font-size="15.5" fill="#e4e4e4">3850</text>
<text x="1912.6" y="778.9" text-anchor="end" font-size="15.5" fill="#e4e4e4">3900</text>
<text x="1912.6" y="753.9" text-anchor="end" font-size="15.5" fill="#e4e4e4">3950</text>
<text x="1912.6" y="728.9" text-anchor="end" font-size="15.5" fill="#e4e4e4">4000</text>
<text x="1912.6" y="703.9" text-anchor="end" font-size="15.5" fill="#e4e4e4">4050</text>
<text x="1912.6" y="678.9" text-anchor="end" font-size="15.5" fill="#e4e4e4">4100</text>
<text x="1912.6" y="653.9" text-anchor="end" font-size="15.5" fill="#e4e4e4">4150</text>
<text x="1912.6" y="628.9" text-anchor="end" font-size="15.5" fill="#e4e4e4">4200</text>
<text x="1912.6" y="603.9" text-anchor="end" font-size="15.5" fill="#e4e4e4">4250</text>
<rect x="1859.6" y="824.6" width="58.4" height="20.6" fill="#000" stroke="#f0f0f0" stroke-width="1.4"/>
<text x="1861.5" y="840.2" font-size="13.2" fill="#00d000" textLength="56" lengthAdjust="spacingAndGlyphs">3775.600</text>
<line x1="38" y1="901.8" x2="1854" y2="901.8" stroke="#f0f0f0" stroke-width="1.5" />
<line x1="38" y1="921.8" x2="1854" y2="921.8" stroke="#f0f0f0" stroke-width="1.5" />
<line x1="45.2" y1="902" x2="45.2" y2="922" stroke="#f0f0f0" stroke-width="1.5" />
<line x1="378.6" y1="902" x2="378.6" y2="922" stroke="#f0f0f0" stroke-width="1.5" />
<line x1="578.64" y1="902" x2="578.64" y2="941.5" stroke="#f0f0f0" stroke-width="1.5" />
<line x1="712" y1="902" x2="712" y2="922" stroke="#f0f0f0" stroke-width="1.5" />
<line x1="978.72" y1="902" x2="978.72" y2="922" stroke="#f0f0f0" stroke-width="1.5" />
<line x1="1312.12" y1="902" x2="1312.12" y2="922" stroke="#f0f0f0" stroke-width="1.5" />
<text x="48" y="917.6" font-size="15.6" fill="#f0f0f0">22</text>
<text x="114.68" y="917.6" font-size="15.6" fill="#f0f0f0">23</text>
<text x="181.36" y="917.6" font-size="15.6" fill="#f0f0f0">24</text>
<text x="248.04" y="917.6" font-size="15.6" fill="#f0f0f0">25</text>
<text x="314.72" y="917.6" font-size="15.6" fill="#f0f0f0">26</text>
<text x="381.4" y="917.6" font-size="15.6" fill="#f0f0f0">29</text>
<text x="448.08" y="917.6" font-size="15.6" fill="#f0f0f0">30</text>
<text x="514.76" y="917.6" font-size="15.6" fill="#f0f0f0">31</text>
<text x="581.44" y="917.6" font-size="15.6" fill="#f0f0f0">1</text>
<text x="648.12" y="917.6" font-size="15.6" fill="#f0f0f0">2</text>
<text x="714.8" y="917.6" font-size="15.6" fill="#f0f0f0">6</text>
<text x="781.48" y="917.6" font-size="15.6" fill="#f0f0f0">7</text>
<text x="848.16" y="917.6" font-size="15.6" fill="#f0f0f0">8</text>
<text x="914.84" y="917.6" font-size="15.6" fill="#f0f0f0">9</text>
<text x="981.52" y="917.6" font-size="15.6" fill="#f0f0f0">12</text>
<text x="1048.2" y="917.6" font-size="15.6" fill="#f0f0f0">13</text>
<text x="1114.88" y="917.6" font-size="15.6" fill="#f0f0f0">14</text>
<text x="1181.56" y="917.6" font-size="15.6" fill="#f0f0f0">15</text>
<text x="1248.24" y="917.6" font-size="15.6" fill="#f0f0f0">16</text>
<text x="1314.92" y="917.6" font-size="15.6" fill="#f0f0f0">19</text>
<text x="1381.6" y="917.6" font-size="15.6" fill="#f0f0f0">20</text>
<text x="1448.28" y="917.6" font-size="15.6" fill="#f0f0f0">21</text>
<text x="1514.96" y="917.6" font-size="15.6" fill="#f0f0f0">22</text>
<text x="1631" y="917.6" font-size="15.6" fill="#f0f0f0">23</text>
<text x="1831" y="917.6" font-size="15.6" fill="#f0f0f0">24</text>
<text x="581.5" y="937.2" font-size="15.6" fill="#f0f0f0">September</text>
<circle cx="1884.5" cy="921" r="10" fill="none" stroke="#ff1616" stroke-width="1.6"/>
<ellipse cx="1881.2" cy="917.8" rx="1.5" ry="1.9" fill="#ff1616"/><ellipse cx="1888" cy="917.8" rx="1.5" ry="1.9" fill="#ff1616"/>
<path d="M1879.4 925.8q5.100 -8.200 10.200 0" fill="none" stroke="#ff1616" stroke-width="1.600"/>
<line x1="1665.7" y1="946.5" x2="1665.7" y2="966" stroke="#8e8e8e" stroke-width="1.4" />
<line x1="1725.7" y1="946.5" x2="1725.7" y2="966" stroke="#8e8e8e" stroke-width="1.4" />
<line x1="1838" y1="946.5" x2="1838" y2="966" stroke="#8e8e8e" stroke-width="1.4" />
<rect x="1673.9" y="946.6" width="17.2" height="18.6" fill="#ebebeb" />
<rect x="1701" y="946.6" width="17.2" height="18.6" fill="#ebebeb" />
<rect x="1734" y="946.6" width="17.2" height="18.6" fill="#ebebeb" />
<rect x="1760.2" y="946.6" width="17.2" height="18.6" fill="#ebebeb" />
<rect x="1786.4" y="946.6" width="17.2" height="18.6" fill="#ebebeb" />
<rect x="1812.6" y="946.6" width="17.2" height="18.6" fill="#ebebeb" />
<rect x="1846.4" y="946.6" width="17.2" height="18.6" fill="#ebebeb" />
<rect x="1872.4" y="946.6" width="17.2" height="18.6" fill="#ebebeb" />
<g fill="none" stroke="#4a4a4a" stroke-width="3.1"><path d="M1676.4 955.4a6.2 6.2 0 0 1 10.2 -3.6"/><path d="M1688.6 957.2a6.2 6.2 0 0 1 -10.2 3.600"/></g>
<path d="M1683.400 954.400l7 .6l-.6 -7.200z M1681.600 958.200l-7 -.6l.6 7.200z" fill="#4a4a4a"/>
<text x="1709.600" y="962.400" text-anchor="middle" font-size="17" fill="#4a4a4a" stroke="#4a4a4a" stroke-width=".55">C</text>
<path d="M1742.6 948.6l4.3 5h-3v5.6h3l-4.3 5l-4.3 -5h3v-5.6h-3z" fill="#4a4a4a"/>
<path d="M1768.8 947.4l3.6 4.2h-2.4v3.6h3.6v-2.4l4.2 3.6l-4.2 3.6v-2.4h-3.6v3.6h2.4l-3.6 4.2l-3.6 -4.2h2.4v-3.6h-3.6v2.4l-4.2 -3.6l4.2 -3.6v2.4h3.6v-3.6h-2.4z" fill="#4a4a4a"/>
<circle cx="1795" cy="956.3" r="7.700" fill="#fbfbfb" stroke="#d2d2d2" stroke-width="1"/>
<circle cx="1795" cy="956.3" r="6.400" fill="#fdfdfd" stroke="#6a6a6a" stroke-width="1.600"/>
<line x1="1791.6" y1="956.3" x2="1798.4" y2="956.3" stroke="#4a4a4a" stroke-width="2" />
<circle cx="1821.2" cy="956.3" r="7.700" fill="#fbfbfb" stroke="#d2d2d2" stroke-width="1"/>
<circle cx="1821.2" cy="956.3" r="6.400" fill="#fdfdfd" stroke="#6a6a6a" stroke-width="1.600"/>
<line x1="1817.8" y1="956.3" x2="1824.6" y2="956.3" stroke="#4a4a4a" stroke-width="2" />
<line x1="1821.2" y1="952.9" x2="1821.2" y2="959.7" stroke="#4a4a4a" stroke-width="2" />
<path d="M1858.6 951v10.6l-7 -5.3z" fill="#c4c4c4"/><path d="M1878 951v10.6l7 -5.3z" fill="#c4c4c4"/>
<rect x="1900" y="950" width="13" height="12.6" fill="#fdfdfd" stroke="#4a4a4a" stroke-width="1.4"/>
<rect x="1900" y="950" width="13" height="2.6" fill="#4a4a4a" />
<line x1="1901.8" y1="955.2" x2="1903.2" y2="955.2" stroke="#4a4a4a" stroke-width="1.2" />
<line x1="1904.6" y1="955.2" x2="1911.4" y2="955.2" stroke="#4a4a4a" stroke-width="1.2" />
<line x1="1901.8" y1="957.8" x2="1903.2" y2="957.8" stroke="#4a4a4a" stroke-width="1.2" />
<line x1="1904.6" y1="957.8" x2="1911.4" y2="957.8" stroke="#4a4a4a" stroke-width="1.2" />
<line x1="1901.8" y1="960.4" x2="1903.2" y2="960.4" stroke="#4a4a4a" stroke-width="1.2" />
<line x1="1904.6" y1="960.4" x2="1911.4" y2="960.4" stroke="#4a4a4a" stroke-width="1.2" />
<rect x="3.2" y="990.9" width="3.2" height="3.4" fill="#555" />
<line x1="30" y1="993.9" x2="131" y2="993.9" stroke="#333" stroke-width="1.5" />
<path d="M156.2 991.5l4.6 4.8l4.6 -4.8" fill="none" stroke="#555" stroke-width="1.4"/>
<line x1="195" y1="993.9" x2="269" y2="993.9" stroke="#333" stroke-width="1.5" />
<path d="M288.7 991.5l4.6 4.8l4.6 -4.8" fill="none" stroke="#555" stroke-width="1.4"/>
<line x1="175.8" y1="977" x2="175.8" y2="1009" stroke="#a0a0a0" stroke-width="1.2" />
<line x1="313.8" y1="974" x2="313.8" y2="1011" stroke="#c8c8c8" stroke-width="1.2" />
<rect x="323.7" y="990.9" width="3.2" height="3.4" fill="#555" />
<line x1="330.4" y1="974" x2="330.4" y2="1011" stroke="#8e8e8e" stroke-width="1.2" />
<rect x="334.5" y="980.6" width="12.2" height="12" fill="#e6e6fa" stroke="#b4b4b4" stroke-width="1.1"/>
<rect x="349.5" y="980.6" width="12.2" height="12" fill="#ffd700" stroke="#b4b4b4" stroke-width="1.1"/>
<rect x="364.5" y="980.6" width="12.2" height="12" fill="#ffff00" stroke="#b4b4b4" stroke-width="1.1"/>
<rect x="379.5" y="980.6" width="12.2" height="12" fill="#696969" stroke="#b4b4b4" stroke-width="1.1"/>
<rect x="394.5" y="980.6" width="12.2" height="12" fill="#32cd32" stroke="#b4b4b4" stroke-width="1.1"/>
<rect x="409.5" y="980.6" width="12.2" height="12" fill="#ffffe0" stroke="#b4b4b4" stroke-width="1.1"/>
<rect x="424.5" y="980.6" width="12.2" height="12" fill="#ff6a20" stroke="#b4b4b4" stroke-width="1.1"/>
<rect x="438.6" y="980.6" width="11.2" height="12" fill="#98fb98" stroke="#b4b4b4" stroke-width="1.1"/>
<rect x="334.5" y="995.6" width="12.2" height="12" fill="#8b0000" stroke="#b4b4b4" stroke-width="1.1"/>
<rect x="349.5" y="995.6" width="12.2" height="12" fill="#6a8594" stroke="#b4b4b4" stroke-width="1.1"/>
<rect x="364.5" y="995.6" width="12.2" height="12" fill="#0000ff" stroke="#b4b4b4" stroke-width="1.1"/>
<rect x="379.5" y="995.6" width="12.2" height="12" fill="#008b00" stroke="#b4b4b4" stroke-width="1.1"/>
<rect x="394.5" y="995.6" width="12.2" height="12" fill="#ff0000" stroke="#fff" stroke-width="1" stroke-dasharray="1.5 1.5"/>
<rect x="409.5" y="995.6" width="12.2" height="12" fill="#000000" stroke="#b4b4b4" stroke-width="1.1"/>
<rect x="424.5" y="995.6" width="12.2" height="12" fill="#3b7ea8" stroke="#b4b4b4" stroke-width="1.1"/>
<rect x="438.6" y="995.6" width="11.2" height="12" fill="#8fd3e6" stroke="#b4b4b4" stroke-width="1.1"/>
<path d="M454.4 991.6h7.6l-3.8 4.4z" fill="#111"/>
<line x1="474.6" y1="974" x2="474.6" y2="1011" stroke="#9a9a9a" stroke-width="1.2" />
<rect x="485.2" y="990.9" width="3.2" height="3.4" fill="#555" />
<line x1="491.8" y1="974" x2="491.8" y2="1011" stroke="#d8d8d8" stroke-width="1" />
<rect x="499.2" y="987.8" width="19.2" height="14.8" fill="#ffffff" stroke="#9db5cf" stroke-width="1.5" rx="1"/>
<line x1="500.4" y1="989.4" x2="509.2" y2="989.4" stroke="#7da0d0" stroke-width="1.5" stroke-dasharray="1.5 .9"/>
<path d="M501.4 999.6l4.3 -3.9l2 1.4" fill="none" stroke="#d23434" stroke-width="1.6"/>
<text x="513.4" y="1000.8" text-anchor="middle" font-size="12.5" fill="#111" style="font-family:'Liberation Serif',serif">1</text>
<rect x="533" y="987.8" width="19.2" height="14.8" fill="#ffffff" stroke="#9db5cf" stroke-width="1.5" rx="1"/>
<line x1="534.2" y1="989.4" x2="543" y2="989.4" stroke="#7da0d0" stroke-width="1.5" stroke-dasharray="1.5 .9"/>
<path d="M535.2 999.6l4.3 -3.9l2 1.4" fill="none" stroke="#d23434" stroke-width="1.6"/>
<text x="547.2" y="1000.8" text-anchor="middle" font-size="12.5" fill="#111" style="font-family:'Liberation Serif',serif">2</text>
<rect x="566.8" y="987.8" width="19.2" height="14.8" fill="#ffffff" stroke="#9db5cf" stroke-width="1.5" rx="1"/>
<line x1="568" y1="989.4" x2="576.8" y2="989.4" stroke="#7da0d0" stroke-width="1.5" stroke-dasharray="1.5 .9"/>
<path d="M569 999.6l4.3 -3.9l2 1.4" fill="none" stroke="#d23434" stroke-width="1.6"/>
<text x="581" y="1000.8" text-anchor="middle" font-size="12.5" fill="#111" style="font-family:'Liberation Serif',serif">3</text>
<rect x="600.6" y="987.8" width="19.2" height="14.8" fill="#ffffff" stroke="#9db5cf" stroke-width="1.5" rx="1"/>
<line x1="601.8" y1="989.4" x2="610.6" y2="989.4" stroke="#7da0d0" stroke-width="1.5" stroke-dasharray="1.5 .9"/>
<path d="M602.8 999.6l4.3 -3.9l2 1.4" fill="none" stroke="#d23434" stroke-width="1.6"/>
<text x="614.8" y="1000.8" text-anchor="middle" font-size="12.5" fill="#111" style="font-family:'Liberation Serif',serif">4</text>
<rect x="634.4" y="987.8" width="19.2" height="14.8" fill="#ffffff" stroke="#9db5cf" stroke-width="1.5" rx="1"/>
<line x1="635.6" y1="989.4" x2="644.4" y2="989.4" stroke="#7da0d0" stroke-width="1.5" stroke-dasharray="1.5 .9"/>
<path d="M636.6 999.6l4.3 -3.9l2 1.4" fill="none" stroke="#d23434" stroke-width="1.6"/>
<text x="648.6" y="1000.8" text-anchor="middle" font-size="12.5" fill="#111" style="font-family:'Liberation Serif',serif">5</text>
<rect x="668.2" y="987.8" width="19.2" height="14.8" fill="#ffffff" stroke="#9db5cf" stroke-width="1.5" rx="1"/>
<line x1="669.4" y1="989.4" x2="678.2" y2="989.4" stroke="#7da0d0" stroke-width="1.5" stroke-dasharray="1.5 .9"/>
<path d="M670.4 999.6l4.3 -3.9l2 1.4" fill="none" stroke="#d23434" stroke-width="1.6"/>
<text x="682.4" y="1000.8" text-anchor="middle" font-size="12.5" fill="#111" style="font-family:'Liberation Serif',serif">6</text>
<line x1="703.4" y1="974" x2="703.4" y2="1011" stroke="#a8a8a8" stroke-width="1.2" />
<line x1="704.6" y1="974" x2="704.6" y2="1011" stroke="#fafafa" stroke-width="1" />
<g transform="translate(25.600 1038.400)"><path d="M6.800 19.200a6.600 6.600 0 0 1 -.8 -13a9.400 9.400 0 0 1 17.200 -.6a7 7 0 0 1 .6 13.600z" fill="url(#cloud)"/><path d="M6.500 9.500a6 6 0 0 1 7.500 2.500a6 6 0 0 1 8 -2.800" fill="none" stroke="#fff" stroke-opacity=".45" stroke-width="1"/></g>
<text x="65.400" y="1046" font-size="15.400" fill="#fff" textLength="28.800" lengthAdjust="spacingAndGlyphs">21°C</text>
<text x="65.400" y="1066" font-size="15.400" fill="#d2d2d2" textLength="57.600" lengthAdjust="spacingAndGlyphs">Nublado</text>
<g transform="translate(520.6 1050.2) scale(1)"><rect x="-14.4" y="-14.4" width="13.6" height="13.6" fill="url(#win)"/><rect x="-14.4" y="0.8" width="13.6" height="13.6" fill="url(#win)"/><rect x="0.8" y="-14.4" width="13.6" height="13.6" fill="url(#win)"/><rect x="0.8" y="0.8" width="13.6" height="13.6" fill="url(#win)"/></g>
<g transform="translate(576 1050.2) scale(1)"><circle cx="2.2" cy="-2.6" r="9.6" fill="#38363c" stroke="#ececec" stroke-width="3.2"/><path d="M-4.8 4.8l-6.6 6.8" stroke="#dcdcdc" stroke-width="3.6" stroke-linecap="round"/></g>
<g transform="translate(630 1050.2) scale(1)"><path d="M-13 13.4l1 -7a14 14 0 1 1 6.6 5.6z" fill="url(#teams)"/><rect x="-8" y="-5.6" width="11.4" height="10.4" rx="2.2" fill="#fff"/><path d="M4.2 -1.8l4.6 -3.2v9l-4.6 -3.2z" fill="#fff"/></g>
<g transform="translate(685.5 1050.2) scale(1)"><rect x="-2" y="-11" width="14.4" height="21.4" fill="#fff" stroke="#2b579a" stroke-width="1.4"/><g stroke="#2b579a" stroke-width="1.5"><path d="M3 -6.8h7M3 -3.4h7M3 0h7M3 3.4h7M3 6.8h7"/></g><path d="M-13.4 -11.6l16.4 -2.6v28.4l-16.4 -2.6z" fill="#2b579a"/><path d="M-10 -4.6l2 9.4l2.2 -9.4l2.2 9.4l2 -9.4" fill="none" stroke="#fff" stroke-width="1.9"/></g>
<g transform="translate(740.8 1050.2) scale(1)"><rect x="-14.800" y="-15.200" width="29.800" height="30.200" rx="2.200" fill="url(#msbg)"/><path d="M-7.400 12.600V1.600l3.700 -.5V12.600z" fill="#fbab1e"/><path d="M-2.400 12.600V-5.900l4 -.6V12.600z" fill="#f8931e"/><path d="M2.600 12.600L3.900 -12.800l3.900 -.600L6.500 12.600z" fill="#f47b20"/></g>
<g transform="translate(796 1050.2) scale(1)"><path d="M-15 -11.6a1.6 1.6 0 0 1 1.6 -1.6h8l3 3h15.8a1.6 1.6 0 0 1 1.6 1.6v3h-30z" fill="#e8a62e"/><rect x="-15" y="-8.4" width="30" height="21.6" rx="1.6" fill="url(#fold)"/><path d="M-8.4 13.2v-4.6a2 2 0 0 1 2 -2h12.8a2 2 0 0 1 2 2v4.6z" fill="#1f7fd6"/><rect x="-5.4" y="9.6" width="10.8" height="1.6" fill="#0f5fb0"/></g>
<g transform="translate(850.8 1050.2) scale(1)"><circle r="13.6" fill="#fbbc05"/><path d="M0 0L-11.78 -6.8A13.6 13.6 0 0 1 11.78 -6.8z" fill="#ea4335"/><path d="M0 0L-11.78 -6.8A13.6 13.6 0 0 0 0 13.6z" fill="#34a853"/><path d="M-11.78 -6.8A13.6 13.6 0 0 1 11.78 -6.8L5.4 -6.2L-5.4 -6.2z" fill="#ea4335"/><path d="M11.78 -6.8A13.6 13.6 0 0 1 0 13.6L5.4 3.2z" fill="#fbbc05"/><circle r="6.4" fill="#fff"/><circle r="5" fill="#4285f4"/><circle cx="10.4" cy="-10.600" r="10.800" fill="#1f1c22" opacity=".55"/><circle cx="10.900" cy="-11.400" r="9.900" fill="#f07000"/><text x="10.900" y="-7.400" text-anchor="middle" font-size="11" font-weight="bold" fill="#ffd2a8">N</text></g>
<g transform="translate(905.8 1050.2) scale(1)"><rect x="-1" y="-10.6" width="14" height="20.6" fill="#fff" stroke="#d24726" stroke-width="1.4"/><circle cx="7" cy="-4" r="3.6" fill="#d24726"/><path d="M7 -4v-3.6a3.6 3.6 0 0 1 3.6 3.6z" fill="#fff"/><path d="M3 3h8M3 6h8" stroke="#d24726" stroke-width="1.4"/><path d="M-13.4 -11.6l16.4 -2.6v28.4l-16.4 -2.6z" fill="#d24726"/><path d="M-8 6.4v-12.4h3.4a3.4 3.4 0 0 1 0 6.8h-3.4" fill="none" stroke="#fff" stroke-width="2.1"/></g>
<g transform="translate(960.6 1050.2) scale(1)"><path d="M-9.800 3.500L-12.800 12.600H12.800L9.800 3.500Q0 9 -9.800 3.500z" fill="url(#vlcb)"/><path d="M-2.500 -13Q0 -15.200 2.500 -13L8 6.200Q0 10.400 -8 6.200z" fill="url(#vlcc)"/><path d="M-4 -8.200Q0 -6.800 4 -8.200L5.400 -3.200Q0 -1.400 -5.400 -3.200z M-6.500 .6Q0 3 6.500 .6L7.700 5Q0 8 -7.700 5z" fill="url(#vlcw)"/></g>
<g transform="translate(1016 1050.2) scale(1)"><circle r="15" fill="url(#edge1)"/><path d="M-6.600 1.200C-7 6 -4.500 11.500 1 14.900A15 15 0 0 0 12.800 7.800C8 9.800 2 9 -1.200 5.200C-2.600 3.500 -3.300 1.500 -3.300 0z" fill="#14539c"/><path d="M2.300 2.900C5.500 6.200 11 6.600 14.700 3.300L16.500 3L16.500 8.500L12.800 7.800C8 9.800 2 9 -1.200 5.200C-2.600 3.500 -3.300 1.500 -3.300 0z" fill="#1f1c22"/><circle cx="0" cy=".2" r="3.500" fill="#1f1c22"/><path d="M-15 -3A15 15 0 0 1 14.700 3.300C11 6.600 5.500 6.200 2.300 2.900C3.600 1.800 3.900 -.4 2.800 -2C1.600 -3.800 -1 -4.400 -3 -3.200C-4.500 -6.500 -10 -9 -15 -3z" fill="url(#edge2)"/></g>
<g transform="translate(1070.5 1050.2) scale(1)"><rect x="-1" y="-10.6" width="14" height="20.6" fill="#fff" stroke="#3955a3" stroke-width="1.4"/><path d="M7.4 -7.400l3 3l-3 3l-3 -3z" fill="none" stroke="#3955a3" stroke-width="1.3"/><rect x="3.600" y="1.800" width="4.400" height="4.400" fill="none" stroke="#3955a3" stroke-width="1.300"/><path d="M-13.4 -11.6l16.4 -2.6v28.4l-16.4 -2.6z" fill="#3955a3"/><path d="M-9.400 -5.400l3.800 11l3.800 -11" fill="none" stroke="#fff" stroke-width="2.100"/></g>
<g transform="translate(1125.5 1050.2) scale(1)"><rect x="-1" y="-10.6" width="14" height="20.6" fill="#fff" stroke="#217346" stroke-width="1.4"/><g stroke="#217346" stroke-width="1.200"><path d="M3 -7h9M3 -3.600h9M3 -.2h9M3 3.200h9M3 6.600h9M7.600 -9v18"/></g><path d="M-13.4 -11.6l16.4 -2.6v28.4l-16.4 -2.6z" fill="#217346"/><path d="M-9 -5.400l7 11M-2 -5.400l-7 11" fill="none" stroke="#fff" stroke-width="2.200"/></g>
<g transform="translate(1180.6 1050.2) scale(1)"><circle r="13.6" fill="#fbbc05"/><path d="M0 0L-11.78 -6.8A13.6 13.6 0 0 1 11.78 -6.8z" fill="#ea4335"/><path d="M0 0L-11.78 -6.8A13.6 13.6 0 0 0 0 13.6z" fill="#34a853"/><path d="M-11.78 -6.8A13.6 13.6 0 0 1 11.78 -6.8L5.4 -6.2L-5.4 -6.2z" fill="#ea4335"/><path d="M11.78 -6.8A13.6 13.6 0 0 1 0 13.6L5.4 3.2z" fill="#fbbc05"/><circle r="6.4" fill="#fff"/><circle r="5" fill="#4285f4"/></g>
<g transform="translate(1235.5 1050.2) scale(1)"><rect x="-11.400" y="-14.600" width="22.800" height="29.200" rx="2.400" fill="#7e8794"/><rect x="-8.800" y="-11.600" width="17.600" height="5.800" fill="#45c4f0"/><rect x="-8.8" y="-3.6" width="4.800" height="4.800" fill="#dfe5ec"/><rect x="-2.4" y="-3.6" width="4.800" height="4.800" fill="#dfe5ec"/><rect x="4" y="-3.6" width="4.800" height="4.800" fill="#dfe5ec"/><rect x="-8.8" y="2.2" width="4.800" height="4.800" fill="#dfe5ec"/><rect x="-2.4" y="2.2" width="4.800" height="4.800" fill="#dfe5ec"/><rect x="4" y="2.2" width="4.800" height="4.800" fill="#174a86"/><rect x="-8.8" y="8" width="4.800" height="4.800" fill="#dfe5ec"/><rect x="-2.4" y="8" width="4.800" height="4.800" fill="#dfe5ec"/><rect x="4" y="8" width="4.800" height="4.800" fill="#174a86"/></g>
<g transform="translate(1290.8 1050.2) scale(1)"><rect x="-14.800" y="-14.800" width="29.600" height="29.600" fill="#0e8a8a"/><path d="M0 -13.400v5.400M-2.200 -11.400h4.400" stroke="#0a0a0a" stroke-width="1.500"/><path d="M0 -8.600c1.600 0 2.600 1.600 2.600 3.200c2 -2.600 5.800 -3.600 8.200 -1.600c2.800 2.400 1.600 7 -2.600 10.400l.8 2.400h-18l.8 -2.400c-4.200 -3.400 -5.400 -8 -2.600 -10.400c2.400 -2 6.200 -1 8.200 1.600c0 -1.600 1 -3.200 2.600 -3.200z" fill="#fff" stroke="#0a0a0a" stroke-width=".9"/><path d="M-9.400 6.400h18.800v2.200h-18.800z M-10 9.400h20v2.400h-20z" fill="#fff" stroke="#0a0a0a" stroke-width=".8"/><path d="M-8.600 12.800h17.200" stroke="#fff" stroke-width="1.400"/></g>
<rect x="1321.2" y="1025.6" width="49" height="50" fill="#2d2a33" rx="4.500" stroke="#37343d" stroke-width="1"/>
<g transform="translate(1345.6 1050.2) scale(1)"><rect x="-14.800" y="-15.200" width="29.800" height="30.200" rx="2.200" fill="url(#msbg)"/><path d="M-7.400 12.600V1.600l3.700 -.5V12.600z" fill="#fbab1e"/><path d="M-2.400 12.600V-5.900l4 -.6V12.600z" fill="#f8931e"/><path d="M2.600 12.600L3.900 -12.800l3.900 -.600L6.500 12.600z" fill="#f47b20"/></g>
<rect x="1335.8" y="1069.9" width="20.2" height="4.2" fill="#4cc2ff" rx="2.100"/>
<g transform="translate(1400.8 1050.2) scale(1)"><rect x="-14.400" y="-14.600" width="29" height="29.400" rx="5" fill="#1f1c22" stroke="#a01c34" stroke-width="1.200"/><text x="0" y="9.200" text-anchor="middle" font-size="15" font-weight="bold" fill="#b4203a" textLength="20.500" lengthAdjust="spacingAndGlyphs">Pro</text><path d="M3 -8.400l2.200 -1.600q2.600 -1 4.400 .8q-1.800 1.800 -4.400 .8z" fill="#c41e3a"/><rect x="-8.800" y="-5.800" width="2.400" height="1.200" fill="#8c1c30"/><path d="M-4 -5.400h9" stroke="#4a1a26" stroke-width="1"/></g>
<rect x="681.5" y="1070" width="8" height="3.8" fill="#9a9a9a" rx="1.900"/>
<rect x="846.8" y="1070" width="8" height="3.8" fill="#9a9a9a" rx="1.900"/>
<rect x="1121.5" y="1070" width="8" height="3.8" fill="#9a9a9a" rx="1.900"/>
<rect x="1396.8" y="1070" width="8" height="3.8" fill="#8a8a8a" rx="1.900"/>
<path d="M1663.400 1054l6.600 -6.800l6.600 6.800" fill="none" stroke="#f0f0f0" stroke-width="1.400"/>
<path d="M1694.600 1055.400a4.200 4.200 0 0 1 -.4 -8.200a5.600 5.600 0 0 1 10.400 -.8a4.400 4.400 0 0 1 1.200 8.600z" fill="#d0d0d0"/><path d="M1699 1047a5.600 5.600 0 0 1 5.600 -.600a4.400 4.400 0 0 1 1.200 8.600h-4z" fill="#8c8c8c"/>
<circle cx="1704.400" cy="1054.600" r="5.400" fill="#e01c24"/><path d="M1702.200 1052.400l4.400 4.400m0 -4.400l-4.400 4.400" stroke="#fff" stroke-width="1.400"/>
<g fill="none" stroke="#f4f4f4" stroke-width="1.700" stroke-linecap="round"><path d="M1725.200 1048.200a13.600 13.600 0 0 1 19.200 0"/><path d="M1728.200 1051.600a9.400 9.400 0 0 1 13.200 0"/><path d="M1731.200 1054.800a5 5 0 0 1 7.200 0"/></g><circle cx="1734.800" cy="1056.600" r="1.500" fill="#f4f4f4"/>
<path d="M1755.600 1047h3.400l4.600 -4.200v15.200l-4.600 -4.200h-3.400z" fill="none" stroke="#f4f4f4" stroke-width="1.400" stroke-linejoin="round"/><g fill="none" stroke="#f4f4f4" stroke-width="1.400" stroke-linecap="round"><path d="M1766.400 1046.600a5.400 5.400 0 0 1 0 7.600"/><path d="M1769 1044a9.200 9.200 0 0 1 0 12.800"/><path d="M1771.600 1041.600a12.600 12.600 0 0 1 0 17.600"/></g>
<rect x="1789.800" y="1044.400" width="13.800" height="10.800" rx="2" fill="none" stroke="#f4f4f4" stroke-width="1.500"/><rect x="1804.200" y="1047.400" width="1.800" height="4.800" fill="#f4f4f4"/><rect x="1791.600" y="1046.200" width="5.200" height="7.200" fill="#f4f4f4"/><path d="M1786.200 1041.800v3.400m3 -3.400v3.400M1785.200 1045.200h5v3.400a2.500 2.500 0 0 1 -5 0zM1787.700 1051v5" stroke="#f4f4f4" stroke-width="1.300" fill="#1f1c22"/>
<text x="1901.400" y="1045.200" text-anchor="end" font-size="14.600" fill="#fff" textLength="35.2" lengthAdjust="spacingAndGlyphs">20:58</text>
<text x="1901.400" y="1065.200" text-anchor="end" font-size="14.600" fill="#fff" textLength="76.500" lengthAdjust="spacingAndGlyphs">22/09/2022</text>
<path d="M6 24v-5.600h1.800v5.600z M8.400 24v-9h1.800v9z M10.800 24v-12.600h1.800v12.600z" fill="#f58220"/>
<line x1="1853.5" y1="6.6" x2="1853.5" y2="25" stroke="#0e0e0e" stroke-width="1.2" />
<line x1="1854.6" y1="6.6" x2="1854.6" y2="25" stroke="#505050" stroke-width="0.8" />
<line x1="1884" y1="6.6" x2="1884" y2="25" stroke="#0e0e0e" stroke-width="1.2" />
<line x1="1885.1" y1="6.6" x2="1885.1" y2="25" stroke="#505050" stroke-width="0.8" />
<rect x="1832.6" y="18.6" width="11.4" height="2.6" fill="#c8c8c8" />
<rect x="1862.4" y="10.6" width="12" height="9.6" fill="none" stroke="#c4c4c4" stroke-width="2"/>
<path d="M1894.400 10.400l9 9.200m0 -9.200l-9 9.200" stroke="#c8c8c8" stroke-width="2.400" fill="none"/>
<line x1="1871.2" y1="45" x2="1871.2" y2="60" stroke="#f4f8fb" stroke-width="1.2" />
<line x1="1893.4" y1="45" x2="1893.4" y2="60" stroke="#f4f8fb" stroke-width="1.2" />
<rect x="1855.4" y="54" width="10.6" height="2.2" fill="#3f6f8c" />
<rect x="1874.6" y="51.6" width="6.6" height="4.6" fill="none" stroke="#3f6f8c" stroke-width="1.700"/>
<path d="M1879.600 50.400v-3h9.200v6h-5" fill="none" stroke="#3f6f8c" stroke-width="1.700"/>
<path d="M1899.400 47.600l7.400 7.600m0 -7.600l-7.400 7.600" stroke="#3f6f8c" stroke-width="2.100" fill="none"/>
<rect x="5" y="73.8" width="25" height="25" fill="url(#pic)" />
<path d="M5 92q8 -12 25 -8M5 84q12 10 25 0" stroke="rgba(255,200,120,.5)" stroke-width="1" fill="none"/>
<text x="17.600" y="92.400" text-anchor="middle" font-size="15.500" font-weight="bold" fill="#fff">P</text>
<line x1="43.4" y1="68" x2="43.4" y2="103" stroke="#bdbdbd" stroke-width="1.4" />
<line x1="44.6" y1="68" x2="44.6" y2="103" stroke="#fafafa" stroke-width="1" />
<rect x="54.2" y="84.4" width="3.4" height="3.6" fill="#555" />
<line x1="60.6" y1="68" x2="60.6" y2="103" stroke="#c4c4c4" stroke-width="1" />
<g transform="translate(77.5 86.2) scale(1)"><path d="M-9 -11h12l6 6v16h-18z" fill="url(#newdoc)" stroke="#7c7c7c" stroke-width="1.500"/><path d="M3 -11v6h6" fill="#f4f4f4" stroke="#7c7c7c" stroke-width="1.200"/></g>
<g transform="translate(112 86.2) scale(1)"><path d="M-10 9v-16h7l2 2.500h8v3.500" fill="#fafafa" stroke="#8a8a8a" stroke-width="1.500"/><path d="M-10 9l4 -9h17l-4 9z" fill="url(#fopen)" stroke="#7a7a7a" stroke-width="1.400"/></g>
<g transform="translate(145 86.2) scale(1)"><path d="M-10 -10.500h18l2.500 2.500v18.500h-20.500z" fill="#e8e8e8" stroke="#6e6e6e" stroke-width="1.600"/><rect x="-6.500" y="-9" width="12.500" height="9.500" fill="url(#savep)"/><rect x="-6" y="3.500" width="12" height="7" fill="#8a8a8a"/><rect x="1.500" y="5" width="2.800" height="4.500" fill="#e0e0e0"/></g>
<line x1="165.5" y1="71" x2="165.5" y2="100" stroke="#a6a6a6" stroke-width="1.2" />
<g transform="translate(186 86.2) scale(1)"><rect x="-10.500" y="-8.500" width="21" height="8" rx="1" fill="#f6f6f6" stroke="#7a7a7a" stroke-width="1.500"/><rect x="7" y="-6.500" width="1.800" height="1.600" fill="#30b030"/><rect x="-7" y="-2.500" width="14" height="13" fill="#fff" stroke="#6e6e6e" stroke-width="1.500"/><rect x="-5.500" y="2" width="11" height="7" fill="#e2efe2"/><path d="M-4.500 3.500h7M-4.500 6h4" stroke="#555" stroke-width="1.200"/></g>
<g transform="translate(220 86.2) scale(1)"><rect x="-10" y="-10.500" width="13" height="17" fill="#f0f0f0" stroke="#bdbdbd" stroke-width="1.200"/><circle cx="0" cy="-2" r="6.200" fill="#bfe0f6" stroke="#4a4a4a" stroke-width="2.200"/><path d="M4.400 3l5.600 7" stroke="#3a3a3a" stroke-width="3.200" stroke-linecap="round"/></g>
<line x1="240.5" y1="71" x2="240.5" y2="100" stroke="#a6a6a6" stroke-width="1.2" />
<g transform="translate(261 86.2) scale(1)"><path d="M-4.500 -10l7 14M4.500 -10l-7 14" stroke="#5a5a5a" stroke-width="2.200" fill="none"/><circle cx="-4.400" cy="7" r="2.900" fill="none" stroke="#4a4a4a" stroke-width="1.800"/><circle cx="4.400" cy="7" r="2.900" fill="none" stroke="#4a4a4a" stroke-width="1.800"/></g>
<g transform="translate(295 86.2) scale(1)"><path d="M-10 -10.500h7l3 3v10h-10z" fill="#f4f4f4" stroke="#6a6a6a" stroke-width="1.400"/><path d="M-1 -2.500h7l3 3v10.500h-10z" fill="#f4f4f4" stroke="#6a6a6a" stroke-width="1.400"/><path d="M1 3h6M1 5.500h6M1 8h6M-8 -5h5M-8 -2.500h5" stroke="#8a8a8a" stroke-width="1"/></g>
<g transform="translate(329.5 86.2) scale(1)"><rect x="-9.500" y="-8" width="19" height="19" rx="1" fill="#d8d2c4" stroke="#6a6a6a" stroke-width="1.500"/><rect x="-6.500" y="-4.500" width="13" height="14" fill="#fbfbfb"/><path d="M-4.500 0h9M-4.500 2.800h9M-4.500 5.600h6" stroke="#8a8a8a" stroke-width="1"/><rect x="-4.500" y="-11.500" width="9" height="6" rx="1.200" fill="#f2d24a" stroke="#7a6a2a" stroke-width="1.200"/></g>
<line x1="349.5" y1="71" x2="349.5" y2="100" stroke="#a6a6a6" stroke-width="1.2" />
<g transform="translate(370.5 86.2) scale(1)"><path d="M-9.500 -3l7.500 -6v4c7 -.5 11 3 10.500 8.500c-.5 4 -4 6.500 -8 7c4 -2 5.500 -5.500 3.500 -8c-1.500 -2 -3.500 -2 -6 -1.500v3.500z" fill="url(#undo)" stroke="#3a7a2a" stroke-width=".8"/></g>
<line x1="390.5" y1="71" x2="390.5" y2="100" stroke="#a6a6a6" stroke-width="1.2" />
<g transform="translate(411 86.2) scale(1)"><circle r="7.200" fill="none" stroke="#2f7fd0" stroke-width="2.300"/><circle r="3.400" fill="#cfe4f6"/><path d="M0 -12v9M0 3v9M-12 0h9M3 0h9" stroke="#1f6fc0" stroke-width="1.800"/></g>
<g transform="translate(445 86.2) scale(1)"><rect x="-11" y="-11" width="11" height="9" fill="none" stroke="#4a4a4a" stroke-width="1.500" stroke-dasharray="2 1.500"/><circle cx="1.500" cy="1" r="5.600" fill="#bfe0f6" stroke="#4a4a4a" stroke-width="2.100"/><path d="M5.600 5.600l5 6" stroke="#3a3a3a" stroke-width="3" stroke-linecap="round"/></g>
<line x1="465.5" y1="71" x2="465.5" y2="100" stroke="#a6a6a6" stroke-width="1.2" />
<rect x="476.2" y="78.8" width="16.2" height="16.2" fill="#1f63c8" stroke="#0f3f90" stroke-width="1.200"/>
<text x="484.200" y="92" text-anchor="middle" font-size="14" font-style="italic" font-weight="bold" fill="#fff" style="font-family:'Liberation Serif',serif">f</text>
<path d="M673.400 83.600l4.800 5l4.800 -5" fill="none" stroke="#444" stroke-width="1.400"/>
<line x1="693.8" y1="71" x2="693.8" y2="100" stroke="#a6a6a6" stroke-width="1.2" />
<g transform="translate(713.8 86.2) scale(1)"><ellipse cx="0" cy="2.500" rx="5.500" ry="7" fill="#f2d0b4" stroke="#5a4a3a" stroke-width="1"/><path d="M-10.500 -1.500c3 -3 18 -3 21 0c-3 1.600 -18 1.600 -21 0z" fill="#3a3a3a"/><path d="M-6.500 -2.500c0 -9 13 -9 13 0z" fill="#4a4a4a"/><circle cx="-2" cy="2" r=".9" fill="#222"/><circle cx="2" cy="2" r=".9" fill="#222"/><path d="M-1.500 6h3" stroke="#7a3a2a" stroke-width="1"/></g>
<text x="740" y="95" font-size="25" font-style="italic" fill="#d0306a" style="font-family:'Liberation Serif',serif">f</text><text x="749.500" y="96.500" font-size="7.500" fill="#d0306a">(x)</text>
<text x="781" y="96" text-anchor="middle" font-size="28" font-weight="bold" fill="#228b22" style="font-family:'Liberation Serif',serif">$</text>
<g transform="translate(815 86.2) scale(1)"><path d="M-9.500 -8h6v4h7v-4h6l2 14c.5 3 -7.500 3 -7.500 0v-6h-8v6c0 3 -8 3 -7.500 0z" fill="#6a6250" stroke="#3a3426" stroke-width="1"/><rect x="-8.500" y="-9.500" width="4.500" height="3" fill="#c8b060"/><rect x="4" y="-9.500" width="4.500" height="3" fill="#c8b060"/><circle cx="-7.500" cy="7" r="2.400" fill="#d8d0a0"/><circle cx="7.500" cy="7" r="2.400" fill="#d8d0a0"/></g>
<g transform="translate(848.8 87) scale(1)"><path d="M-4 -2.800h6v-4l10 6.800l-10 6.800v-4h-6z" fill="#2a8ae0"/><path d="M-11.500 -2.800v5.600M-9.200 -2.800v5.600M-6.900 -2.800v5.600" stroke="#2a8ae0" stroke-width="1.300"/></g>
<g transform="translate(882.5 86.2) scale(1)"><path d="M-2 -12h4v5h4l-6 6l-6 -6h4z" fill="#2a8ae0"/><rect x="-10.500" y="1.500" width="21" height="9" rx="1" fill="#ececec" stroke="#5a5a5a" stroke-width="1.400"/><path d="M-10.500 5.500h21" stroke="#9a9a9a" stroke-width="1"/><rect x="6.500" y="7" width="2" height="1.600" fill="#30b030"/></g>
<g transform="translate(915.5 86.2) scale(1)"><rect x="-3.500" y="-11" width="6" height="12" rx="1.500" fill="#7a6aa8" stroke="#4a3f7a" stroke-width=".8" transform="rotate(-8)"/><path d="M-9 11.500h17M-6.500 7h7M3 -1c6 2 7 8 2 12" fill="none" stroke="#1f6fd0" stroke-width="2.300"/></g>
<g transform="translate(950 86.2) scale(1)"><rect x="-11.500" y="-11.500" width="20.500" height="22.500" fill="#fdfdfd" stroke="#2f5f9a" stroke-width="1.600"/><path d="M-8.500 -7.500h13M-8.500 -4h13M-8.500 2h6M-8.500 5h6" stroke="#9ab0c8" stroke-width="1.200"/><rect x="-9" y="-1" width="4" height="4" fill="#b8c8dc"/><circle cx="3" cy="3.500" r="4.400" fill="#9fd0f4" stroke="#3a3a3a" stroke-width="1.700"/><path d="M6.200 7l4.800 5.200" stroke="#2a2a2a" stroke-width="2.600" stroke-linecap="round"/></g>
<path d="M974.600 80.400v11.200l2.800 -2.400l2.400 5l2 -1l-2.400 -4.800l3.800 -.4z" fill="#f4f4f4" stroke="#333" stroke-width="1"/>
<text x="990.400" y="95.400" text-anchor="middle" font-size="22" font-weight="bold" fill="#2a8a22">?</text>
<line x1="1009.5" y1="71" x2="1009.5" y2="100" stroke="#a6a6a6" stroke-width="1.2" />
<rect x="1020.6" y="84.4" width="3.4" height="3.6" fill="#555" />
<g transform="translate(1043 86.2) scale(1)"><rect x="-11.5" y="-11.5" width="15" height="11.500" fill="#f0f0f0" stroke="#8a8a8a" stroke-width="1.300"/><rect x="-7.8" y="-6.5" width="15" height="11.500" fill="#f0f0f0" stroke="#8a8a8a" stroke-width="1.300"/><rect x="-4.1" y="-1.5" width="15" height="11.500" fill="#f0f0f0" stroke="#8a8a8a" stroke-width="1.300"/><path d="M-2 7.500l3 -3l2.500 2l3 -3.500l2.500 1.500" fill="none" stroke="#8a8a8a" stroke-width="1"/></g>
<g transform="translate(1077.5 86.2) scale(1)"><rect x="-11.500" y="-11" width="23" height="22" rx="1" fill="#f2f2f2" stroke="#8a8a8a" stroke-width="1.500"/><path d="M0 -11v22" stroke="#8a8a8a" stroke-width="1.500"/><path d="M-10 4l3 -4l2.500 2l3 -5M1.500 3l3 -4l2.500 2.500l3.500 -5" fill="none" stroke="#8a8a8a" stroke-width="1"/></g>
<g transform="translate(1111 86.2) scale(1)"><rect x="-11.500" y="-11" width="23" height="22" rx="1" fill="#f2f2f2" stroke="#8a8a8a" stroke-width="1.500"/><path d="M-11.500 0h23" stroke="#8a8a8a" stroke-width="1.500"/><path d="M-9 -3l4 -4l3 2.500l4 -4l4 4M-9 8l4 -4l3 2.500l4 -4l4 4" fill="none" stroke="#8a8a8a" stroke-width="1"/></g>
<g transform="translate(1145 86.2) scale(1)"><rect x="-11.8" y="-9.3" width="11" height="8.500" fill="#f2f2f2" stroke="#8a8a8a" stroke-width="1.200"/><path d="M-10.5 -2.5l3 -3l2 1.500l3.500 -3.500" fill="none" stroke="#8a8a8a" stroke-width=".9"/><rect x="-11.8" y="0.7" width="11" height="8.500" fill="#f2f2f2" stroke="#8a8a8a" stroke-width="1.200"/><path d="M-10.5 7.5l3 -3l2 1.500l3.500 -3.500" fill="none" stroke="#8a8a8a" stroke-width=".9"/><rect x="0.8" y="-9.3" width="11" height="8.500" fill="#f2f2f2" stroke="#8a8a8a" stroke-width="1.200"/><path d="M2.1 -2.5l3 -3l2 1.500l3.500 -3.500" fill="none" stroke="#8a8a8a" stroke-width=".9"/><rect x="0.8" y="0.7" width="11" height="8.500" fill="#f2f2f2" stroke="#8a8a8a" stroke-width="1.200"/><path d="M2.1 7.5l3 -3l2 1.500l3.500 -3.500" fill="none" stroke="#8a8a8a" stroke-width=".9"/></g>
<g transform="translate(1178.8 86.2) scale(1)"><rect x="-11.500" y="-9.300" width="23.500" height="18.500" fill="#f2f2f2" stroke="#8a8a8a" stroke-width="1.200"/><path d="M-11.500 0h23.500M0 -9.300v18.500" stroke="#b8b8b8" stroke-width="1"/><circle r="5" fill="none" stroke="#4a4a4a" stroke-width="3.200" stroke-dasharray="2.300 1.630"/><circle r="3.600" fill="#4a4a4a"/><circle r="1.500" fill="#eee"/></g>
<line x1="1204.5" y1="68" x2="1204.5" y2="103" stroke="#b0b0b0" stroke-width="1.3" />
<rect x="15.5" y="113.6" width="3.4" height="3.2" fill="#555" />
<rect x="15.5" y="343" width="3.4" height="3.2" fill="#555" />
<path d="M6.700 129.300L7.900 143.700L11.400 141.300L15.500 148.500Q17.300 150.400 19.400 148.800Q21.200 147 20 145.200L15.700 138.200L19.900 135.700z" fill="url(#ptr)" stroke="#2a78cc" stroke-width="1.500" stroke-linejoin="round"/>
<path d="M13.700 162.600v17M5 171.100h17.400" stroke="#505050" stroke-width="2.500"/>
<line x1="0" y1="190.5" x2="26" y2="190.5" stroke="#bcbcbc" stroke-width="1.2" />
<line x1="4.5" y1="201.5" x2="23" y2="220.5" stroke="#3a3a3a" stroke-width="2" />
<line x1="5" y1="244" x2="23" y2="244" stroke="#4a4a4a" stroke-width="2.4" />
<line x1="14" y1="268" x2="14" y2="286" stroke="#4a4a4a" stroke-width="2.4" />
<line x1="4.5" y1="299.5" x2="23" y2="318.5" stroke="#3a3a3a" stroke-width="1.8" />
<text x="16.200" y="307.400" font-size="11" fill="#444">L</text><text x="4.200" y="319" font-size="11" fill="#444">S</text>
<path d="M8.500 363.500v7l-5 -3.500z M20.500 363.500v7l5 -3.500z" fill="#111"/>
<line x1="0" y1="387.5" x2="26" y2="387.5" stroke="#bcbcbc" stroke-width="1.2" />
<text x="14" y="412.500" text-anchor="middle" font-size="13" font-weight="bold" fill="#3a3a3a" textLength="19" lengthAdjust="spacingAndGlyphs">abc</text>
<line x1="2" y1="428" x2="2" y2="452.5" stroke="#c4c4c4" stroke-width="1.3" />
<line x1="2" y1="428" x2="26.5" y2="428" stroke="#c4c4c4" stroke-width="1.3" />
<line x1="10.1" y1="428" x2="10.1" y2="452.5" stroke="#8e8e8e" stroke-width="1.3" />
<line x1="2" y1="436.1" x2="26.5" y2="436.1" stroke="#8e8e8e" stroke-width="1.3" />
<line x1="18.2" y1="428" x2="18.2" y2="452.5" stroke="#8e8e8e" stroke-width="1.3" />
<line x1="2" y1="444.2" x2="26.5" y2="444.2" stroke="#8e8e8e" stroke-width="1.3" />
<line x1="26.3" y1="428" x2="26.3" y2="452.5" stroke="#c4c4c4" stroke-width="1.3" />
<line x1="2" y1="452.3" x2="26.5" y2="452.3" stroke="#c4c4c4" stroke-width="1.3" />
<line x1="0" y1="459.5" x2="26" y2="459.5" stroke="#bcbcbc" stroke-width="1.2" />
<ellipse cx="13.500" cy="479" rx="11" ry="7.200" fill="url(#shp)" stroke="#3a3a3a" stroke-width="1.300"/>
<rect x="2.6" y="505.5" width="21.8" height="15" fill="url(#shp)" stroke="#3a3a3a" stroke-width="1.300" rx="1"/>
<path d="M13.500 537l10.500 14h-21z" fill="url(#shp)" stroke="#3a3a3a" stroke-width="1.300" stroke-linejoin="round"/>
</svg>
</div>
</body></html>
